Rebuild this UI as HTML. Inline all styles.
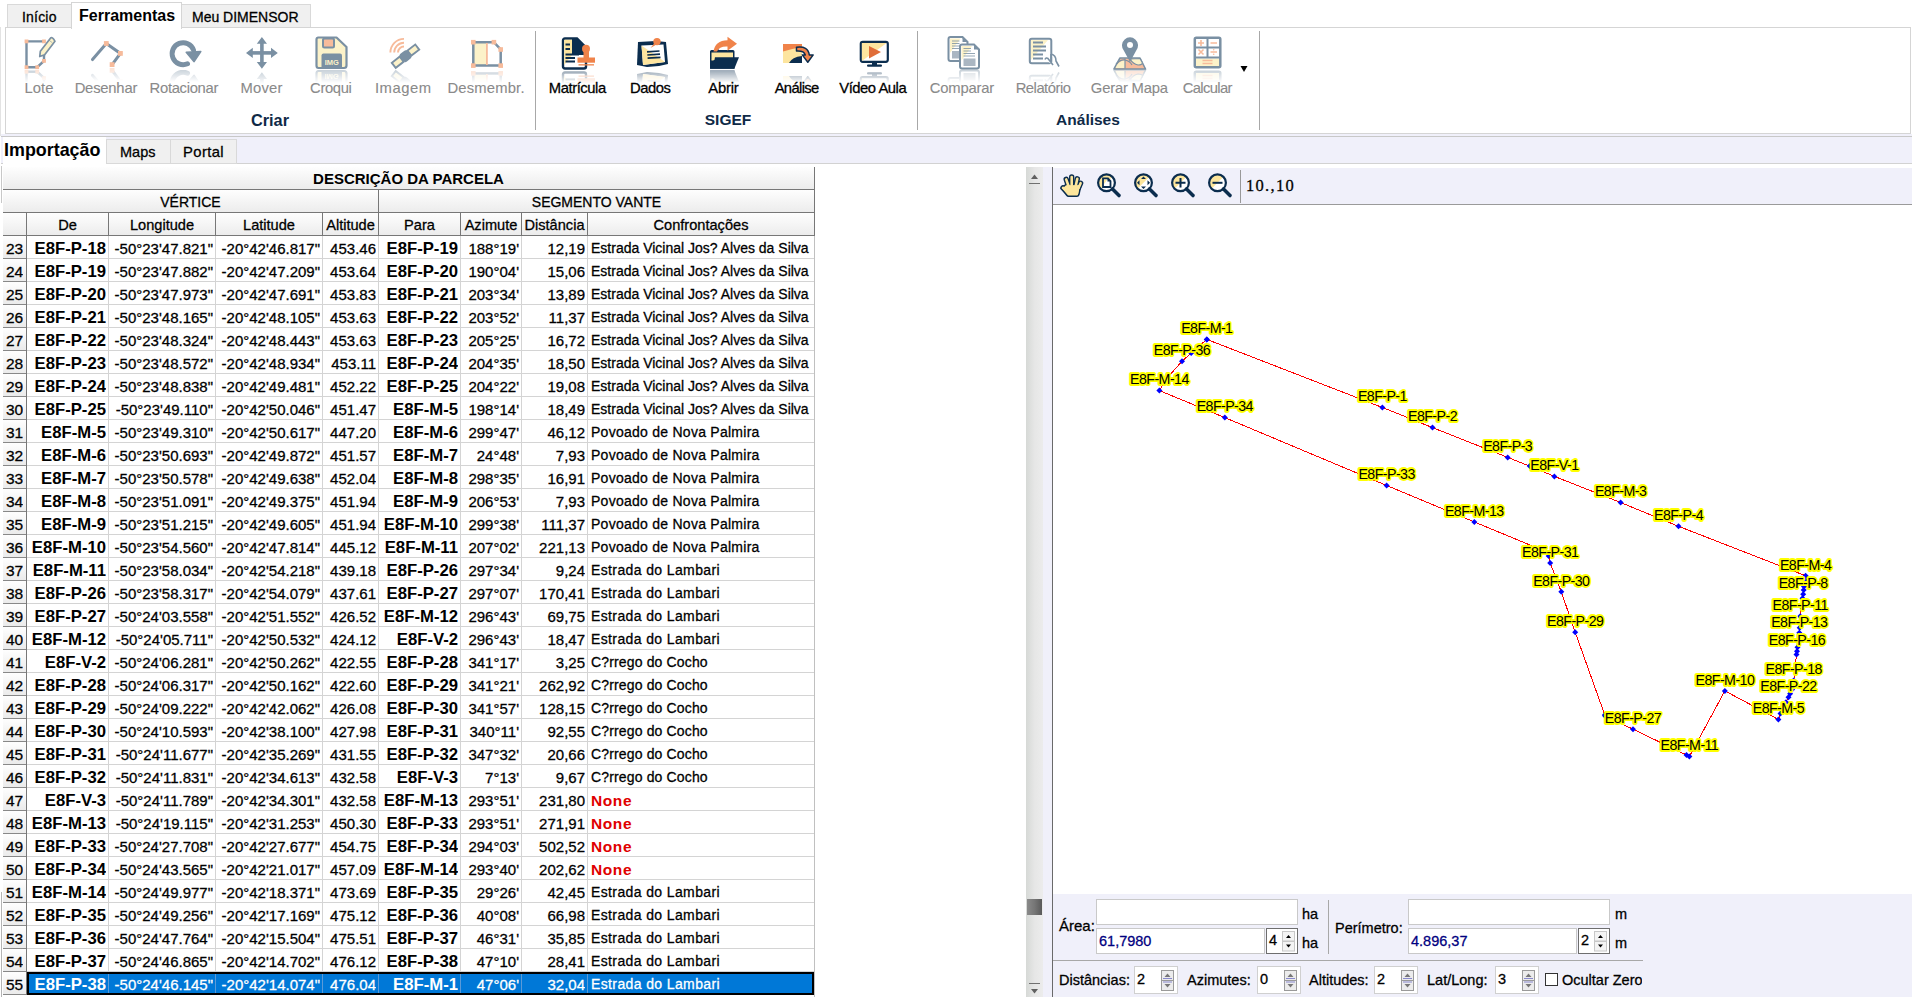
<!DOCTYPE html><html><head><meta charset="utf-8"><style>
*{margin:0;padding:0;box-sizing:border-box}
html,body{width:1912px;height:997px;overflow:hidden;background:#fff}
body{position:relative;font-family:'Liberation Sans',sans-serif;color:#000;-webkit-text-stroke-width:0.28px}
svg{-webkit-text-stroke-width:0}
.b,.grp{-webkit-text-stroke-width:0}
.a{position:absolute}
.t{position:absolute;white-space:pre;line-height:1}
.tab{position:absolute;background:#f0f0f0;border:1px solid #d9d9d9;border-bottom:none}
.rl{position:absolute;font-size:14.8px;white-space:pre;text-align:center;line-height:14px}
.dis{color:#8a8a8a;-webkit-text-stroke-width:0.1px}
.grp{position:absolute;font-size:15.5px;font-weight:bold;color:#0f2a47;white-space:pre;line-height:16px}
.hd{position:absolute;background:linear-gradient(#fefefe,#ececec);}
.row{position:absolute;left:3px;width:812px;height:23px}
.c{position:absolute;top:0;height:23px;white-space:pre;line-height:23px;overflow:hidden}
.num{font-size:15px}
.b{font-weight:bold;font-size:16.7px}
.tx{font-size:14px}
.lbl{position:absolute;font-size:13.5px;letter-spacing:-0.3px;white-space:pre;line-height:13px;color:#000;
 text-shadow:1px 0 #ff0,-1px 0 #ff0,0 1px #ff0,0 -1px #ff0,1px 1px #ff0,-1px -1px #ff0,1px -1px #ff0,-1px 1px #ff0,2px 0 #ff0,-2px 0 #ff0,0 2px #ff0,0 -2px #ff0}
</style></head><body>
<div class="tab" style="left:7px;top:4px;width:65px;height:24px"></div>
<div class="tab" style="left:181px;top:4px;width:130px;height:24px"></div>
<div class="a" style="left:5px;top:27px;width:1906px;height:107px;border:1px solid #d5d5d5;background:#fff"></div>
<div class="a" style="left:71px;top:2px;width:111px;height:27px;border:1px solid #d5d5d5;border-bottom:none;background:#fff"></div>
<div class="a" style="left:0px;top:27px;width:1px;height:109px;background:#e3e3e3"></div>
<div class="t" style="left:22px;top:10px;font-size:14px;letter-spacing:0.2px">Início</div>
<div class="t" style="left:79px;top:8px;font-size:16px;font-weight:bold;-webkit-text-stroke-width:0">Ferramentas</div>
<div class="t" style="left:192px;top:10px;font-size:14px">Meu DIMENSOR</div>
<svg class="a" style="left:24px;top:36px" width="32" height="47" viewBox="0 0 32 47"><g><path d="M2.5 5.4 H20 M2.5 5.4 V31.2 H13.2 L20 24.9 V19" fill="none" stroke="#7a90a3" stroke-width="2.4"/><path d="M15.75 20.56 L16.33 15.32 L26.63 1.92 Q28.5 0.5 30.97 5.28 L20.67 18.68 Z" fill="#fcf2c9" stroke="#7a90a3" stroke-width="1.7" stroke-linejoin="round"/><path d="M25.2 4.3 L28.3 6.7" stroke="#7a90a3" stroke-width="1" opacity="0.6"/><rect x="0.6000000000000001" y="3.5000000000000004" width="3.8" height="3.8" fill="#f7bb9b"/><rect x="18.1" y="3.5000000000000004" width="3.8" height="3.8" fill="#f7bb9b"/><rect x="0.6000000000000001" y="29.3" width="3.8" height="3.8" fill="#f7bb9b"/><rect x="11.299999999999999" y="29.3" width="3.8" height="3.8" fill="#f7bb9b"/><rect x="18.1" y="23.0" width="3.8" height="3.8" fill="#f7bb9b"/></g><defs><linearGradient id="gm24_36" x1="0" y1="0" x2="0" y2="1"><stop offset="0" stop-color="#fff" stop-opacity="0.45"/><stop offset="1" stop-color="#fff" stop-opacity="0"/></linearGradient><mask id="km24_36"><rect x="0" y="33" width="32" height="14" fill="url(#gm24_36)"/></mask></defs><g mask="url(#km24_36)"><g transform="translate(0,67) scale(1,-1)"><path d="M2.5 5.4 H20 M2.5 5.4 V31.2 H13.2 L20 24.9 V19" fill="none" stroke="#7a90a3" stroke-width="2.4"/><path d="M15.75 20.56 L16.33 15.32 L26.63 1.92 Q28.5 0.5 30.97 5.28 L20.67 18.68 Z" fill="#fcf2c9" stroke="#7a90a3" stroke-width="1.7" stroke-linejoin="round"/><path d="M25.2 4.3 L28.3 6.7" stroke="#7a90a3" stroke-width="1" opacity="0.6"/><rect x="0.6000000000000001" y="3.5000000000000004" width="3.8" height="3.8" fill="#f7bb9b"/><rect x="18.1" y="3.5000000000000004" width="3.8" height="3.8" fill="#f7bb9b"/><rect x="0.6000000000000001" y="29.3" width="3.8" height="3.8" fill="#f7bb9b"/><rect x="11.299999999999999" y="29.3" width="3.8" height="3.8" fill="#f7bb9b"/><rect x="18.1" y="23.0" width="3.8" height="3.8" fill="#f7bb9b"/></g></g></svg>
<svg class="a" style="left:90px;top:40px" width="33" height="41" viewBox="0 0 33 41"><g><path d="M2.5 19.6 L16.3 3.5 L30.4 13.4 L22.1 24.6" fill="none" stroke="#7a90a3" stroke-width="3" stroke-linecap="round"/><rect x="13.9" y="1.1" width="4.8" height="4.8" fill="#f7bb9b"/><rect x="28.0" y="11.0" width="4.8" height="4.8" fill="#f7bb9b"/><rect x="19.700000000000003" y="22.200000000000003" width="4.8" height="4.8" fill="#f7bb9b"/></g><defs><linearGradient id="gm90_40" x1="0" y1="0" x2="0" y2="1"><stop offset="0" stop-color="#fff" stop-opacity="0.45"/><stop offset="1" stop-color="#fff" stop-opacity="0"/></linearGradient><mask id="km90_40"><rect x="0" y="27" width="33" height="14" fill="url(#gm90_40)"/></mask></defs><g mask="url(#km90_40)"><g transform="translate(0,55) scale(1,-1)"><path d="M2.5 19.6 L16.3 3.5 L30.4 13.4 L22.1 24.6" fill="none" stroke="#7a90a3" stroke-width="3" stroke-linecap="round"/><rect x="13.9" y="1.1" width="4.8" height="4.8" fill="#f7bb9b"/><rect x="28.0" y="11.0" width="4.8" height="4.8" fill="#f7bb9b"/><rect x="19.700000000000003" y="22.200000000000003" width="4.8" height="4.8" fill="#f7bb9b"/></g></g></svg>
<svg class="a" style="left:167px;top:38px" width="35" height="44" viewBox="0 0 35 44"><g><path d="M20.5 25.8 A11 11 0 1 1 26.5 12" fill="none" stroke="#7a90a3" stroke-width="5" stroke-linecap="round"/><path d="M19.2 14.3 L33.8 13.6 L27.1 23.7 Z" fill="#7a90a3" stroke="#7a90a3" stroke-width="1.5" stroke-linejoin="round"/></g><defs><linearGradient id="gm167_38" x1="0" y1="0" x2="0" y2="1"><stop offset="0" stop-color="#fff" stop-opacity="0.45"/><stop offset="1" stop-color="#fff" stop-opacity="0"/></linearGradient><mask id="km167_38"><rect x="0" y="30" width="35" height="14" fill="url(#gm167_38)"/></mask></defs><g mask="url(#km167_38)"><g transform="translate(0,61) scale(1,-1)"><path d="M20.5 25.8 A11 11 0 1 1 26.5 12" fill="none" stroke="#7a90a3" stroke-width="5" stroke-linecap="round"/><path d="M19.2 14.3 L33.8 13.6 L27.1 23.7 Z" fill="#7a90a3" stroke="#7a90a3" stroke-width="1.5" stroke-linejoin="round"/></g></g></svg>
<svg class="a" style="left:245px;top:36px" width="34" height="48" viewBox="0 0 34 48"><g><rect x="15.099999999999998" y="6" width="3.6" height="21" fill="#7a90a3"/><rect x="6" y="15.099999999999998" width="21" height="3.6" fill="#7a90a3"/><path d="M16.9 1 L22.0 7.8 L11.799999999999999 7.8Z M16.9 32.8 L22.0 26 L11.799999999999999 26Z M1 16.9 L7.8 11.799999999999999 L7.8 22.0Z M32.8 16.9 L26 11.799999999999999 L26 22.0Z" fill="#7a90a3"/></g><defs><linearGradient id="gm245_36" x1="0" y1="0" x2="0" y2="1"><stop offset="0" stop-color="#fff" stop-opacity="0.45"/><stop offset="1" stop-color="#fff" stop-opacity="0"/></linearGradient><mask id="km245_36"><rect x="0" y="34" width="34" height="14" fill="url(#gm245_36)"/></mask></defs><g mask="url(#km245_36)"><g transform="translate(0,69) scale(1,-1)"><rect x="15.099999999999998" y="6" width="3.6" height="21" fill="#7a90a3"/><rect x="6" y="15.099999999999998" width="21" height="3.6" fill="#7a90a3"/><path d="M16.9 1 L22.0 7.8 L11.799999999999999 7.8Z M16.9 32.8 L22.0 26 L11.799999999999999 26Z M1 16.9 L7.8 11.799999999999999 L7.8 22.0Z M32.8 16.9 L26 11.799999999999999 L26 22.0Z" fill="#7a90a3"/></g></g></svg>
<svg class="a" style="left:315px;top:36px" width="33" height="47" viewBox="0 0 33 47"><g><path d="M3 1.5 H21.5 L31.5 11 V29.5 Q31.5 32 29 32 H3.5 Q1.5 32 1.5 29.5 V3.5 Q1.5 1.5 3.5 1.5Z" fill="#fcf2c9" stroke="#7a90a3" stroke-width="2.2" stroke-linejoin="round"/><rect x="8" y="2.5" width="11" height="9" rx="1.5" fill="#f7bb9b" stroke="#7a90a3" stroke-width="2"/><path d="M6.5 32 V19.5 Q6.5 17.5 8.5 17.5 H25 Q27 17.5 27 19.5 V32Z" fill="#7a90a3"/><text x="16.8" y="29" font-size="7.5" font-weight="bold" text-anchor="middle" fill="#fcf2c9" font-family="Liberation Sans">IMG</text></g><defs><linearGradient id="gm315_36" x1="0" y1="0" x2="0" y2="1"><stop offset="0" stop-color="#fff" stop-opacity="0.45"/><stop offset="1" stop-color="#fff" stop-opacity="0"/></linearGradient><mask id="km315_36"><rect x="0" y="33" width="33" height="14" fill="url(#gm315_36)"/></mask></defs><g mask="url(#km315_36)"><g transform="translate(0,67) scale(1,-1)"><path d="M3 1.5 H21.5 L31.5 11 V29.5 Q31.5 32 29 32 H3.5 Q1.5 32 1.5 29.5 V3.5 Q1.5 1.5 3.5 1.5Z" fill="#fcf2c9" stroke="#7a90a3" stroke-width="2.2" stroke-linejoin="round"/><rect x="8" y="2.5" width="11" height="9" rx="1.5" fill="#f7bb9b" stroke="#7a90a3" stroke-width="2"/><path d="M6.5 32 V19.5 Q6.5 17.5 8.5 17.5 H25 Q27 17.5 27 19.5 V32Z" fill="#7a90a3"/><text x="16.8" y="29" font-size="7.5" font-weight="bold" text-anchor="middle" fill="#fcf2c9" font-family="Liberation Sans">IMG</text></g></g></svg>
<svg class="a" style="left:386px;top:36px" width="36" height="47" viewBox="0 0 36 47"><g><path d="M4.4 16.5 A13.6 13.6 0 0 1 18 2.9000000000000004" fill="none" stroke="#f7bb9b" stroke-width="1.9"/><path d="M8.2 16.5 A9.8 9.8 0 0 1 18 6.699999999999999" fill="none" stroke="#f7bb9b" stroke-width="1.9"/><path d="M12 16.5 A6 6 0 0 1 18 10.5" fill="none" stroke="#f7bb9b" stroke-width="1.9"/><g transform="rotate(-38 19.5 20.2)"><rect x="4.6" y="17" width="10" height="6.4" fill="#fcf2c9" stroke="#7a90a3" stroke-width="1.9"/><rect x="24.4" y="17" width="10" height="6.4" fill="#fcf2c9" stroke="#7a90a3" stroke-width="1.9"/><rect x="14.8" y="15.2" width="9.4" height="10" rx="2.6" fill="#7a90a3"/></g></g><defs><linearGradient id="gm386_36" x1="0" y1="0" x2="0" y2="1"><stop offset="0" stop-color="#fff" stop-opacity="0.45"/><stop offset="1" stop-color="#fff" stop-opacity="0"/></linearGradient><mask id="km386_36"><rect x="0" y="33" width="36" height="14" fill="url(#gm386_36)"/></mask></defs><g mask="url(#km386_36)"><g transform="translate(0,67) scale(1,-1)"><path d="M4.4 16.5 A13.6 13.6 0 0 1 18 2.9000000000000004" fill="none" stroke="#f7bb9b" stroke-width="1.9"/><path d="M8.2 16.5 A9.8 9.8 0 0 1 18 6.699999999999999" fill="none" stroke="#f7bb9b" stroke-width="1.9"/><path d="M12 16.5 A6 6 0 0 1 18 10.5" fill="none" stroke="#f7bb9b" stroke-width="1.9"/><g transform="rotate(-38 19.5 20.2)"><rect x="4.6" y="17" width="10" height="6.4" fill="#fcf2c9" stroke="#7a90a3" stroke-width="1.9"/><rect x="24.4" y="17" width="10" height="6.4" fill="#fcf2c9" stroke="#7a90a3" stroke-width="1.9"/><rect x="14.8" y="15.2" width="9.4" height="10" rx="2.6" fill="#7a90a3"/></g></g></g></svg>
<svg class="a" style="left:470px;top:38px" width="34" height="45" viewBox="0 0 34 45"><g><rect x="3.3" y="4.2" width="13.6" height="23.4" fill="#fcf2c9"/><path d="M3.3 4.2 H23.9 L30.7 11.5 V27.6 H3.3Z" fill="none" stroke="#7a90a3" stroke-width="2.5"/><rect x="16" y="5" width="1.8" height="22" fill="#f7bb9b"/><rect x="1.0" y="1.9000000000000004" width="4.6" height="4.6" fill="#f7bb9b"/><rect x="21.599999999999998" y="1.9000000000000004" width="4.6" height="4.6" fill="#f7bb9b"/><rect x="28.4" y="9.2" width="4.6" height="4.6" fill="#f7bb9b"/><rect x="28.4" y="25.3" width="4.6" height="4.6" fill="#f7bb9b"/><rect x="1.0" y="25.3" width="4.6" height="4.6" fill="#f7bb9b"/></g><defs><linearGradient id="gm470_38" x1="0" y1="0" x2="0" y2="1"><stop offset="0" stop-color="#fff" stop-opacity="0.45"/><stop offset="1" stop-color="#fff" stop-opacity="0"/></linearGradient><mask id="km470_38"><rect x="0" y="31" width="34" height="14" fill="url(#gm470_38)"/></mask></defs><g mask="url(#km470_38)"><g transform="translate(0,63) scale(1,-1)"><rect x="3.3" y="4.2" width="13.6" height="23.4" fill="#fcf2c9"/><path d="M3.3 4.2 H23.9 L30.7 11.5 V27.6 H3.3Z" fill="none" stroke="#7a90a3" stroke-width="2.5"/><rect x="16" y="5" width="1.8" height="22" fill="#f7bb9b"/><rect x="1.0" y="1.9000000000000004" width="4.6" height="4.6" fill="#f7bb9b"/><rect x="21.599999999999998" y="1.9000000000000004" width="4.6" height="4.6" fill="#f7bb9b"/><rect x="28.4" y="9.2" width="4.6" height="4.6" fill="#f7bb9b"/><rect x="28.4" y="25.3" width="4.6" height="4.6" fill="#f7bb9b"/><rect x="1.0" y="25.3" width="4.6" height="4.6" fill="#f7bb9b"/></g></g></svg>
<svg class="a" style="left:561px;top:37px" width="35" height="47" viewBox="0 0 35 47"><g><path d="M4 1.5 H16 L25 10.5 V29.5 Q25 31.5 23 31.5 H4 Q2 31.5 2 29.5 V3.5 Q2 1.5 4 1.5Z" fill="#fff" stroke="#0b2d4e" stroke-width="2.4"/><path d="M3.2 2.7 H11 V18 L3.2 28Z" fill="#fde59f"/><path d="M11 2 H16 L24.5 10.5 V18 H11Z" fill="#0b2d4e"/><path d="M4.5 7.5 H9 M4.5 12 H9 M4.5 17.5 H18 M4.5 21 H14 M4.5 24.5 H14" stroke="#0b2d4e" stroke-width="1.8"/><circle cx="25" cy="11.8" r="4" fill="#f0834a"/><rect x="22.5" y="12" width="5.5" height="9" fill="#f0834a"/><rect x="16.5" y="20.5" width="17.5" height="5.2" fill="#f0834a"/><rect x="17.5" y="27" width="15.5" height="1.6" fill="#f0834a" opacity="0.8"/></g><defs><linearGradient id="gm561_37" x1="0" y1="0" x2="0" y2="1"><stop offset="0" stop-color="#fff" stop-opacity="0.45"/><stop offset="1" stop-color="#fff" stop-opacity="0"/></linearGradient><mask id="km561_37"><rect x="0" y="33" width="35" height="14" fill="url(#gm561_37)"/></mask></defs><g mask="url(#km561_37)"><g transform="translate(0,67) scale(1,-1)"><path d="M4 1.5 H16 L25 10.5 V29.5 Q25 31.5 23 31.5 H4 Q2 31.5 2 29.5 V3.5 Q2 1.5 4 1.5Z" fill="#fff" stroke="#0b2d4e" stroke-width="2.4"/><path d="M3.2 2.7 H11 V18 L3.2 28Z" fill="#fde59f"/><path d="M11 2 H16 L24.5 10.5 V18 H11Z" fill="#0b2d4e"/><path d="M4.5 7.5 H9 M4.5 12 H9 M4.5 17.5 H18 M4.5 21 H14 M4.5 24.5 H14" stroke="#0b2d4e" stroke-width="1.8"/><circle cx="25" cy="11.8" r="4" fill="#f0834a"/><rect x="22.5" y="12" width="5.5" height="9" fill="#f0834a"/><rect x="16.5" y="20.5" width="17.5" height="5.2" fill="#f0834a"/><rect x="17.5" y="27" width="15.5" height="1.6" fill="#f0834a" opacity="0.8"/></g></g></svg>
<svg class="a" style="left:635px;top:37px" width="35" height="46" viewBox="0 0 35 46"><g><path d="M3 5 L21 4 L31 5 L33 27 L24 29 L12 30 L2 28Z" fill="#0b2d4e"/><path d="M6.5 8.5 L28.5 7.5 L30 25 L8 28Z" fill="#fff"/><path d="M6.5 8.5 L30 25 L8 28Z" fill="#fde59f"/><path d="M12 14.8 L24.5 14 M12.3 18 L25 17.2 M12.6 21.2 L25.5 20.4" stroke="#0b2d4e" stroke-width="1.7"/><circle cx="22" cy="4.6" r="3.7" fill="#f0834a"/><path d="M19.5 6 L15.5 11 L21.5 7.5Z" fill="#f0834a"/></g><defs><linearGradient id="gm635_37" x1="0" y1="0" x2="0" y2="1"><stop offset="0" stop-color="#fff" stop-opacity="0.45"/><stop offset="1" stop-color="#fff" stop-opacity="0"/></linearGradient><mask id="km635_37"><rect x="0" y="32" width="35" height="14" fill="url(#gm635_37)"/></mask></defs><g mask="url(#km635_37)"><g transform="translate(0,65) scale(1,-1)"><path d="M3 5 L21 4 L31 5 L33 27 L24 29 L12 30 L2 28Z" fill="#0b2d4e"/><path d="M6.5 8.5 L28.5 7.5 L30 25 L8 28Z" fill="#fff"/><path d="M6.5 8.5 L30 25 L8 28Z" fill="#fde59f"/><path d="M12 14.8 L24.5 14 M12.3 18 L25 17.2 M12.6 21.2 L25.5 20.4" stroke="#0b2d4e" stroke-width="1.7"/><circle cx="22" cy="4.6" r="3.7" fill="#f0834a"/><path d="M19.5 6 L15.5 11 L21.5 7.5Z" fill="#f0834a"/></g></g></svg>
<svg class="a" style="left:709px;top:36px" width="31" height="47" viewBox="0 0 31 47"><g><path d="M1 15.5 Q1 14 2.5 14 H6 L7 13 H9 L10 14 H24 Q25.5 14 25.5 15.5 V32.8 H1Z" fill="#0b2d4e"/><rect x="2.5" y="16.5" width="21.5" height="8" fill="#fde59f"/><path d="M6 21.3 H30 L25.3 32.8 H1 Z" fill="#0b2d4e"/><path d="M2.5 24 L5.5 21.3 V24Z" fill="#fde59f"/><path d="M4.5 15.5 Q6 4.5 18.5 4.2 V0.8 L28 7.7 L18.5 14.8 V10.5 Q10.5 10 8 15.5Z" fill="#f0834a"/></g><defs><linearGradient id="gm709_36" x1="0" y1="0" x2="0" y2="1"><stop offset="0" stop-color="#fff" stop-opacity="0.45"/><stop offset="1" stop-color="#fff" stop-opacity="0"/></linearGradient><mask id="km709_36"><rect x="0" y="33" width="31" height="14" fill="url(#gm709_36)"/></mask></defs><g mask="url(#km709_36)"><g transform="translate(0,67) scale(1,-1)"><path d="M1 15.5 Q1 14 2.5 14 H6 L7 13 H9 L10 14 H24 Q25.5 14 25.5 15.5 V32.8 H1Z" fill="#0b2d4e"/><rect x="2.5" y="16.5" width="21.5" height="8" fill="#fde59f"/><path d="M6 21.3 H30 L25.3 32.8 H1 Z" fill="#0b2d4e"/><path d="M2.5 24 L5.5 21.3 V24Z" fill="#fde59f"/><path d="M4.5 15.5 Q6 4.5 18.5 4.2 V0.8 L28 7.7 L18.5 14.8 V10.5 Q10.5 10 8 15.5Z" fill="#f0834a"/></g></g></svg>
<svg class="a" style="left:782px;top:43px" width="32" height="40" viewBox="0 0 32 40"><g><rect x="1" y="1" width="19" height="19" fill="#fde59f"/><path d="M1 1 H20 V4 Q10 5.5 1 8.5Z" fill="#f0834a"/><path d="M20 13 Q10 14 7 20 H20Z" fill="#0b2d4e"/><path d="M14.5 4.2 Q26 2.5 27.3 11.9 H31.2 L25.8 19.3 L20.3 11.9 H23.3 Q22 7.5 14.5 8Z" fill="#f0834a" stroke="#0b2d4e" stroke-width="1.5" stroke-linejoin="round"/></g><defs><linearGradient id="gm782_43" x1="0" y1="0" x2="0" y2="1"><stop offset="0" stop-color="#fff" stop-opacity="0.45"/><stop offset="1" stop-color="#fff" stop-opacity="0"/></linearGradient><mask id="km782_43"><rect x="0" y="26" width="32" height="14" fill="url(#gm782_43)"/></mask></defs><g mask="url(#km782_43)"><g transform="translate(0,53) scale(1,-1)"><rect x="1" y="1" width="19" height="19" fill="#fde59f"/><path d="M1 1 H20 V4 Q10 5.5 1 8.5Z" fill="#f0834a"/><path d="M20 13 Q10 14 7 20 H20Z" fill="#0b2d4e"/><path d="M14.5 4.2 Q26 2.5 27.3 11.9 H31.2 L25.8 19.3 L20.3 11.9 H23.3 Q22 7.5 14.5 8Z" fill="#f0834a" stroke="#0b2d4e" stroke-width="1.5" stroke-linejoin="round"/></g></g></svg>
<svg class="a" style="left:859px;top:40px" width="31" height="43" viewBox="0 0 31 43"><g><rect x="1.8" y="1.8" width="27" height="20" rx="2" fill="#fff" stroke="#0b2d4e" stroke-width="2.2"/><path d="M2.9 2.9 H27.7 L2.9 20.9Z" fill="#fde59f"/><path d="M10 6 V18.5 L22 12Z" fill="#e06e3a"/><rect x="13" y="22" width="5" height="3" fill="#0b2d4e"/><rect x="8" y="24.5" width="15" height="2.3" rx="1.1" fill="#0b2d4e"/></g><defs><linearGradient id="gm859_40" x1="0" y1="0" x2="0" y2="1"><stop offset="0" stop-color="#fff" stop-opacity="0.45"/><stop offset="1" stop-color="#fff" stop-opacity="0"/></linearGradient><mask id="km859_40"><rect x="0" y="29" width="31" height="14" fill="url(#gm859_40)"/></mask></defs><g mask="url(#km859_40)"><g transform="translate(0,59) scale(1,-1)"><rect x="1.8" y="1.8" width="27" height="20" rx="2" fill="#fff" stroke="#0b2d4e" stroke-width="2.2"/><path d="M2.9 2.9 H27.7 L2.9 20.9Z" fill="#fde59f"/><path d="M10 6 V18.5 L22 12Z" fill="#e06e3a"/><rect x="13" y="22" width="5" height="3" fill="#0b2d4e"/><rect x="8" y="24.5" width="15" height="2.3" rx="1.1" fill="#0b2d4e"/></g></g></svg>
<svg class="a" style="left:947px;top:36px" width="33" height="47" viewBox="0 0 33 47"><g><path d="M3.5 1 H15.5 L20.5 6 V23 Q20.5 25 18.5 25 H3.5 Q1.5 25 1.5 23 V3 Q1.5 1 3.5 1Z" fill="#fff" stroke="#7a90a3" stroke-width="2"/><path d="M3.0 2.5 H13.5 L3.0 17Z" fill="#fcf2c9"/><path d="M15.5 1 L20.5 6 H15.5Z" fill="#7a90a3"/><path d="M5.0 5 H12.5 M5.0 7.5 H12.5 M5.0 10 H16.5 M5.0 12.5 H16.5" stroke="#7a90a3" stroke-width="1" opacity="0.8"/><rect x="5.0" y="15" width="12" height="7.5" fill="#aab6c2"/><path d="M15 8.5 H27 L32 13.5 V30.5 Q32 32.5 30 32.5 H15 Q13 32.5 13 30.5 V10.5 Q13 8.5 15 8.5Z" fill="#fff" stroke="#7a90a3" stroke-width="2"/><path d="M14.5 10.0 H25 L14.5 24.5Z" fill="#fcf2c9"/><path d="M27 8.5 L32 13.5 H27Z" fill="#7a90a3"/><path d="M16.5 12.5 H24 M16.5 15.0 H24 M16.5 17.5 H28 M16.5 20.0 H28" stroke="#7a90a3" stroke-width="1" opacity="0.8"/><rect x="16.5" y="22.5" width="12" height="7.5" fill="#aab6c2"/></g><defs><linearGradient id="gm947_36" x1="0" y1="0" x2="0" y2="1"><stop offset="0" stop-color="#fff" stop-opacity="0.45"/><stop offset="1" stop-color="#fff" stop-opacity="0"/></linearGradient><mask id="km947_36"><rect x="0" y="33" width="33" height="14" fill="url(#gm947_36)"/></mask></defs><g mask="url(#km947_36)"><g transform="translate(0,67) scale(1,-1)"><path d="M3.5 1 H15.5 L20.5 6 V23 Q20.5 25 18.5 25 H3.5 Q1.5 25 1.5 23 V3 Q1.5 1 3.5 1Z" fill="#fff" stroke="#7a90a3" stroke-width="2"/><path d="M3.0 2.5 H13.5 L3.0 17Z" fill="#fcf2c9"/><path d="M15.5 1 L20.5 6 H15.5Z" fill="#7a90a3"/><path d="M5.0 5 H12.5 M5.0 7.5 H12.5 M5.0 10 H16.5 M5.0 12.5 H16.5" stroke="#7a90a3" stroke-width="1" opacity="0.8"/><rect x="5.0" y="15" width="12" height="7.5" fill="#aab6c2"/><path d="M15 8.5 H27 L32 13.5 V30.5 Q32 32.5 30 32.5 H15 Q13 32.5 13 30.5 V10.5 Q13 8.5 15 8.5Z" fill="#fff" stroke="#7a90a3" stroke-width="2"/><path d="M14.5 10.0 H25 L14.5 24.5Z" fill="#fcf2c9"/><path d="M27 8.5 L32 13.5 H27Z" fill="#7a90a3"/><path d="M16.5 12.5 H24 M16.5 15.0 H24 M16.5 17.5 H28 M16.5 20.0 H28" stroke="#7a90a3" stroke-width="1" opacity="0.8"/><rect x="16.5" y="22.5" width="12" height="7.5" fill="#aab6c2"/></g></g></svg>
<svg class="a" style="left:1028px;top:37px" width="32" height="46" viewBox="0 0 32 46"><g><rect x="1.8" y="1.8" width="21.5" height="24.5" rx="2" fill="#fff" stroke="#7a90a3" stroke-width="2"/><path d="M3 3 H20 L3 23Z" fill="#fcf2c9"/><path d="M5 5.5 H15 M5 9.5 H18 M5 13.5 H18 M5 17.5 H15 M5 21.5 H15" stroke="#7a90a3" stroke-width="1.8"/><path d="M23 17 Q28 18 28 24 L31 29.5 M17 22.5 Q18 20 20 21.5 L25 28 M23 25 V17" fill="#fff" stroke="#7a90a3" stroke-width="1.6"/></g><defs><linearGradient id="gm1028_37" x1="0" y1="0" x2="0" y2="1"><stop offset="0" stop-color="#fff" stop-opacity="0.45"/><stop offset="1" stop-color="#fff" stop-opacity="0"/></linearGradient><mask id="km1028_37"><rect x="0" y="32" width="32" height="14" fill="url(#gm1028_37)"/></mask></defs><g mask="url(#km1028_37)"><g transform="translate(0,65) scale(1,-1)"><rect x="1.8" y="1.8" width="21.5" height="24.5" rx="2" fill="#fff" stroke="#7a90a3" stroke-width="2"/><path d="M3 3 H20 L3 23Z" fill="#fcf2c9"/><path d="M5 5.5 H15 M5 9.5 H18 M5 13.5 H18 M5 17.5 H15 M5 21.5 H15" stroke="#7a90a3" stroke-width="1.8"/><path d="M23 17 Q28 18 28 24 L31 29.5 M17 22.5 Q18 20 20 21.5 L25 28 M23 25 V17" fill="#fff" stroke="#7a90a3" stroke-width="1.6"/></g></g></svg>
<svg class="a" style="left:1113px;top:36px" width="34" height="47" viewBox="0 0 34 47"><g><path d="M7 22 H27 L32.5 33 H1Z" fill="#f7bb9b" stroke="#7a90a3" stroke-width="1.6" stroke-linejoin="round"/><path d="M2.5 32 Q5 25 12 24 V32Z" fill="#fcf2c9"/><path d="M17 23 Q20 28 25 29 Q29 29 29.5 27 L27 22.5Z" fill="#fcf2c9" stroke="#7a90a3" stroke-width="1.2"/><path d="M12 22.5 V32.5 M3 28 Q8 23 12 24 Q17 25 19 29" fill="none" stroke="#7a90a3" stroke-width="1.2"/><path d="M17 26 L10.5 14 A8 8 0 1 1 23.5 14Z" fill="#7a90a3"/><circle cx="17" cy="9" r="3" fill="#fff"/></g><defs><linearGradient id="gm1113_36" x1="0" y1="0" x2="0" y2="1"><stop offset="0" stop-color="#fff" stop-opacity="0.45"/><stop offset="1" stop-color="#fff" stop-opacity="0"/></linearGradient><mask id="km1113_36"><rect x="0" y="33" width="34" height="14" fill="url(#gm1113_36)"/></mask></defs><g mask="url(#km1113_36)"><g transform="translate(0,67) scale(1,-1)"><path d="M7 22 H27 L32.5 33 H1Z" fill="#f7bb9b" stroke="#7a90a3" stroke-width="1.6" stroke-linejoin="round"/><path d="M2.5 32 Q5 25 12 24 V32Z" fill="#fcf2c9"/><path d="M17 23 Q20 28 25 29 Q29 29 29.5 27 L27 22.5Z" fill="#fcf2c9" stroke="#7a90a3" stroke-width="1.2"/><path d="M12 22.5 V32.5 M3 28 Q8 23 12 24 Q17 25 19 29" fill="none" stroke="#7a90a3" stroke-width="1.2"/><path d="M17 26 L10.5 14 A8 8 0 1 1 23.5 14Z" fill="#7a90a3"/><circle cx="17" cy="9" r="3" fill="#fff"/></g></g></svg>
<svg class="a" style="left:1193px;top:36px" width="29" height="47" viewBox="0 0 29 47"><g><rect x="1.8" y="1.8" width="25.5" height="29.5" rx="1.5" fill="#fff" stroke="#7a90a3" stroke-width="2.5"/><rect x="3" y="22.5" width="23" height="7.5" fill="#fcf2c9"/><path d="M14.5 2 V21.5 M2 11.5 H27 M2 21.5 H27" stroke="#7a90a3" stroke-width="2"/><path d="M5 7 H11 M8 4 V10 M17.5 7 H24 M5.5 13.5 L10.5 18.5 M10.5 13.5 L5.5 18.5 M17.5 16 H24 M9.5 24.5 H19.5 M9.5 27.5 H19.5" stroke="#f7bb9b" stroke-width="1.6"/><circle cx="20.7" cy="13.7" r="0.8" fill="#f7bb9b"/><circle cx="20.7" cy="18.3" r="0.8" fill="#f7bb9b"/></g><defs><linearGradient id="gm1193_36" x1="0" y1="0" x2="0" y2="1"><stop offset="0" stop-color="#fff" stop-opacity="0.45"/><stop offset="1" stop-color="#fff" stop-opacity="0"/></linearGradient><mask id="km1193_36"><rect x="0" y="33" width="29" height="14" fill="url(#gm1193_36)"/></mask></defs><g mask="url(#km1193_36)"><g transform="translate(0,67) scale(1,-1)"><rect x="1.8" y="1.8" width="25.5" height="29.5" rx="1.5" fill="#fff" stroke="#7a90a3" stroke-width="2.5"/><rect x="3" y="22.5" width="23" height="7.5" fill="#fcf2c9"/><path d="M14.5 2 V21.5 M2 11.5 H27 M2 21.5 H27" stroke="#7a90a3" stroke-width="2"/><path d="M5 7 H11 M8 4 V10 M17.5 7 H24 M5.5 13.5 L10.5 18.5 M10.5 13.5 L5.5 18.5 M17.5 16 H24 M9.5 24.5 H19.5 M9.5 27.5 H19.5" stroke="#f7bb9b" stroke-width="1.6"/><circle cx="20.7" cy="13.7" r="0.8" fill="#f7bb9b"/><circle cx="20.7" cy="18.3" r="0.8" fill="#f7bb9b"/></g></g></svg>
<div class="rl dis" style="left:-20.985px;top:81px;width:120px;letter-spacing:0.03px">Lote</div>
<div class="rl dis" style="left:45.895px;top:81px;width:120px;letter-spacing:-0.21px">Desenhar</div>
<div class="rl dis" style="left:123.845px;top:81px;width:120px;letter-spacing:-0.31px">Rotacionar</div>
<div class="rl dis" style="left:201.585px;top:81px;width:120px;letter-spacing:0.17px">Mover</div>
<div class="rl dis" style="left:270.82px;top:81px;width:120px;letter-spacing:-0.36px">Croqui</div>
<div class="rl dis" style="left:343.275px;top:81px;width:120px;letter-spacing:0.55px">Imagem</div>
<div class="rl dis" style="left:426.085px;top:81px;width:120px;letter-spacing:0.17px">Desmembr.</div>
<div class="rl" style="left:517.28px;top:81px;width:120px;letter-spacing:-0.44px">Matrícula</div>
<div class="rl" style="left:590.265px;top:81px;width:120px;letter-spacing:-0.47px">Dados</div>
<div class="rl" style="left:663.395px;top:81px;width:120px;letter-spacing:-0.21px">Abrir</div>
<div class="rl" style="left:736.68px;top:81px;width:120px;letter-spacing:-0.64px">Análise</div>
<div class="rl" style="left:812.765px;top:81px;width:120px;letter-spacing:-0.47px">Vídeo Aula</div>
<div class="rl dis" style="left:901.905px;top:81px;width:120px;letter-spacing:-0.19px">Comparar</div>
<div class="rl dis" style="left:983.05px;top:81px;width:120px;letter-spacing:-0.5px">Relatório</div>
<div class="rl dis" style="left:1069.295px;top:81px;width:120px;letter-spacing:-0.21px">Gerar Mapa</div>
<div class="rl dis" style="left:1147.28px;top:81px;width:120px;letter-spacing:-0.64px">Calcular</div>
<div class="grp" style="left:220px;top:112px;width:100px;text-align:center;font-size:16.3px">Criar</div>
<div class="grp" style="left:678px;top:112px;width:100px;text-align:center">SIGEF</div>
<div class="grp" style="left:1038px;top:112px;width:100px;text-align:center">Análises</div>
<div class="a" style="left:535px;top:31px;width:1px;height:99px;background:#a8a8a8"></div>
<div class="a" style="left:917px;top:31px;width:1px;height:99px;background:#a8a8a8"></div>
<div class="a" style="left:1259px;top:31px;width:1px;height:99px;background:#a8a8a8"></div>
<svg class="a" style="left:1240px;top:65px" width="8" height="8"><path d="M0.5 1 H7.5 L4 7Z" fill="#000"/></svg>
<div class="a" style="left:1px;top:134px;width:1911px;height:30px;background:#f0f0fa;border-top:0"></div>
<div class="a" style="left:1px;top:136px;width:1911px;height:1px;background:#c8c8c8"></div>
<div class="a" style="left:1px;top:163px;width:1911px;height:1px;background:#d2d2d2"></div>
<div class="tab" style="left:106px;top:139px;width:65px;height:25px;border-bottom:1px solid #d9d9d9"></div>
<div class="tab" style="left:170px;top:139px;width:67px;height:25px;border-bottom:1px solid #d9d9d9"></div>
<div class="a" style="left:3px;top:137px;width:103px;height:30px;background:#fff"></div>
<div class="t" style="left:4px;top:142px;font-size:17.9px;font-weight:bold;-webkit-text-stroke-width:0">Importação</div>
<div class="t" style="left:120px;top:145px;font-size:14.5px">Maps</div>
<div class="t" style="left:183px;top:145px;font-size:14.8px;letter-spacing:0.4px">Portal</div>
<div class="hd" style="left:3px;top:167px;width:811px;height:22px"></div>
<div class="hd" style="left:3px;top:190px;width:811px;height:22px"></div>
<div class="hd" style="left:3px;top:213px;width:811px;height:22px"></div>
<div class="a" style="left:3px;top:189px;width:811px;height:1px;background:#777"></div>
<div class="a" style="left:3px;top:212px;width:811px;height:1px;background:#777"></div>
<div class="a" style="left:3px;top:235px;width:811px;height:1px;background:#777"></div>
<div class="a" style="left:378px;top:190px;width:1px;height:45px;background:#777"></div>
<div class="a" style="left:26px;top:213px;width:1px;height:22px;background:#777"></div>
<div class="a" style="left:108px;top:213px;width:1px;height:22px;background:#777"></div>
<div class="a" style="left:215px;top:213px;width:1px;height:22px;background:#777"></div>
<div class="a" style="left:322px;top:213px;width:1px;height:22px;background:#777"></div>
<div class="a" style="left:378px;top:213px;width:1px;height:22px;background:#777"></div>
<div class="a" style="left:460px;top:213px;width:1px;height:22px;background:#777"></div>
<div class="a" style="left:521px;top:213px;width:1px;height:22px;background:#777"></div>
<div class="a" style="left:587px;top:213px;width:1px;height:22px;background:#777"></div>
<div class="a" style="left:814px;top:167px;width:1px;height:69px;background:#777"></div>
<div class="a" style="left:814px;top:236px;width:1px;height:761px;background:#c0c0c0"></div>
<div class="c" style="left:3px;width:811px;top:167px;text-align:center;font-size:15px;font-weight:bold;line-height:24px;-webkit-text-stroke-width:0">DESCRIÇÃO DA PARCELA</div>
<div class="c" style="left:3px;width:375px;top:190px;text-align:center;font-size:14px;line-height:24px">VÉRTICE</div>
<div class="c" style="left:379px;width:435px;top:190px;text-align:center;font-size:14px;line-height:24px">SEGMENTO VANTE</div>
<div class="c" style="left:27px;width:81px;top:213px;text-align:center;font-size:14.6px;line-height:24px">De</div>
<div class="c" style="left:109px;width:106px;top:213px;text-align:center;font-size:14.6px;line-height:24px">Longitude</div>
<div class="c" style="left:216px;width:106px;top:213px;text-align:center;font-size:14.6px;line-height:24px">Latitude</div>
<div class="c" style="left:323px;width:55px;top:213px;text-align:center;font-size:14.6px;line-height:24px">Altitude</div>
<div class="c" style="left:379px;width:81px;top:213px;text-align:center;font-size:14.6px;line-height:24px">Para</div>
<div class="c" style="left:461px;width:60px;top:213px;text-align:center;font-size:14.6px;line-height:24px">Azimute</div>
<div class="c" style="left:522px;width:65px;top:213px;text-align:center;font-size:14.6px;line-height:24px">Distância</div>
<div class="c" style="left:588px;width:226px;top:213px;text-align:center;font-size:14.6px;line-height:24px">Confrontações</div>
<div class="a" style="left:3px;top:236px;width:23px;height:759px;background:linear-gradient(#fff,#f0f0f0)"></div>
<div class="a" style="left:3px;top:236px;width:23px;height:22px;background:linear-gradient(#fefefe,#ebebeb)"></div>
<div class="a" style="left:3px;top:258px;width:23px;height:1px;background:#888"></div>
<div class="a" style="left:26px;top:236px;width:1px;height:23px;background:#777"></div>
<div class="c tx" style="left:6px;top:236px;line-height:25px;font-size:15.5px">23</div>
<div class="a" style="left:27px;top:258px;width:787px;height:1px;background:#d4d4d4"></div>
<div class="a" style="left:108px;top:236px;width:1px;height:23px;background:#d4d4d4"></div>
<div class="a" style="left:215px;top:236px;width:1px;height:23px;background:#d4d4d4"></div>
<div class="a" style="left:322px;top:236px;width:1px;height:23px;background:#d4d4d4"></div>
<div class="a" style="left:378px;top:236px;width:1px;height:23px;background:#d4d4d4"></div>
<div class="a" style="left:460px;top:236px;width:1px;height:23px;background:#d4d4d4"></div>
<div class="a" style="left:521px;top:236px;width:1px;height:23px;background:#d4d4d4"></div>
<div class="a" style="left:587px;top:236px;width:1px;height:23px;background:#d4d4d4"></div>
<div class="c b" style="left:27px;width:79px;top:236px;text-align:right;line-height:25px;">E8F-P-18</div>
<div class="c num" style="left:109px;width:104px;top:236px;text-align:right;line-height:25px;">-50°23&#x27;47.821&quot;</div>
<div class="c num" style="left:216px;width:104px;top:236px;text-align:right;line-height:25px;">-20°42&#x27;46.817&quot;</div>
<div class="c num" style="left:323px;width:53px;top:236px;text-align:right;line-height:25px;">453.46</div>
<div class="c b" style="left:379px;width:79px;top:236px;text-align:right;line-height:25px;">E8F-P-19</div>
<div class="c num" style="left:461px;width:58px;top:236px;text-align:right;line-height:25px;">188°19&#x27;</div>
<div class="c num" style="left:522px;width:63px;top:236px;text-align:right;line-height:25px;">12,19</div>
<div class="c tx" style="left:591px;width:223px;top:236px;line-height:25px;letter-spacing:0px;">Estrada Vicinal Jos? Alves da Silva</div>
<div class="a" style="left:3px;top:259px;width:23px;height:22px;background:linear-gradient(#fefefe,#ebebeb)"></div>
<div class="a" style="left:3px;top:281px;width:23px;height:1px;background:#888"></div>
<div class="a" style="left:26px;top:259px;width:1px;height:23px;background:#777"></div>
<div class="c tx" style="left:6px;top:259px;line-height:25px;font-size:15.5px">24</div>
<div class="a" style="left:27px;top:281px;width:787px;height:1px;background:#d4d4d4"></div>
<div class="a" style="left:108px;top:259px;width:1px;height:23px;background:#d4d4d4"></div>
<div class="a" style="left:215px;top:259px;width:1px;height:23px;background:#d4d4d4"></div>
<div class="a" style="left:322px;top:259px;width:1px;height:23px;background:#d4d4d4"></div>
<div class="a" style="left:378px;top:259px;width:1px;height:23px;background:#d4d4d4"></div>
<div class="a" style="left:460px;top:259px;width:1px;height:23px;background:#d4d4d4"></div>
<div class="a" style="left:521px;top:259px;width:1px;height:23px;background:#d4d4d4"></div>
<div class="a" style="left:587px;top:259px;width:1px;height:23px;background:#d4d4d4"></div>
<div class="c b" style="left:27px;width:79px;top:259px;text-align:right;line-height:25px;">E8F-P-19</div>
<div class="c num" style="left:109px;width:104px;top:259px;text-align:right;line-height:25px;">-50°23&#x27;47.882&quot;</div>
<div class="c num" style="left:216px;width:104px;top:259px;text-align:right;line-height:25px;">-20°42&#x27;47.209&quot;</div>
<div class="c num" style="left:323px;width:53px;top:259px;text-align:right;line-height:25px;">453.64</div>
<div class="c b" style="left:379px;width:79px;top:259px;text-align:right;line-height:25px;">E8F-P-20</div>
<div class="c num" style="left:461px;width:58px;top:259px;text-align:right;line-height:25px;">190°04&#x27;</div>
<div class="c num" style="left:522px;width:63px;top:259px;text-align:right;line-height:25px;">15,06</div>
<div class="c tx" style="left:591px;width:223px;top:259px;line-height:25px;letter-spacing:0px;">Estrada Vicinal Jos? Alves da Silva</div>
<div class="a" style="left:3px;top:282px;width:23px;height:22px;background:linear-gradient(#fefefe,#ebebeb)"></div>
<div class="a" style="left:3px;top:304px;width:23px;height:1px;background:#888"></div>
<div class="a" style="left:26px;top:282px;width:1px;height:23px;background:#777"></div>
<div class="c tx" style="left:6px;top:282px;line-height:25px;font-size:15.5px">25</div>
<div class="a" style="left:27px;top:304px;width:787px;height:1px;background:#d4d4d4"></div>
<div class="a" style="left:108px;top:282px;width:1px;height:23px;background:#d4d4d4"></div>
<div class="a" style="left:215px;top:282px;width:1px;height:23px;background:#d4d4d4"></div>
<div class="a" style="left:322px;top:282px;width:1px;height:23px;background:#d4d4d4"></div>
<div class="a" style="left:378px;top:282px;width:1px;height:23px;background:#d4d4d4"></div>
<div class="a" style="left:460px;top:282px;width:1px;height:23px;background:#d4d4d4"></div>
<div class="a" style="left:521px;top:282px;width:1px;height:23px;background:#d4d4d4"></div>
<div class="a" style="left:587px;top:282px;width:1px;height:23px;background:#d4d4d4"></div>
<div class="c b" style="left:27px;width:79px;top:282px;text-align:right;line-height:25px;">E8F-P-20</div>
<div class="c num" style="left:109px;width:104px;top:282px;text-align:right;line-height:25px;">-50°23&#x27;47.973&quot;</div>
<div class="c num" style="left:216px;width:104px;top:282px;text-align:right;line-height:25px;">-20°42&#x27;47.691&quot;</div>
<div class="c num" style="left:323px;width:53px;top:282px;text-align:right;line-height:25px;">453.83</div>
<div class="c b" style="left:379px;width:79px;top:282px;text-align:right;line-height:25px;">E8F-P-21</div>
<div class="c num" style="left:461px;width:58px;top:282px;text-align:right;line-height:25px;">203°34&#x27;</div>
<div class="c num" style="left:522px;width:63px;top:282px;text-align:right;line-height:25px;">13,89</div>
<div class="c tx" style="left:591px;width:223px;top:282px;line-height:25px;letter-spacing:0px;">Estrada Vicinal Jos? Alves da Silva</div>
<div class="a" style="left:3px;top:305px;width:23px;height:22px;background:linear-gradient(#fefefe,#ebebeb)"></div>
<div class="a" style="left:3px;top:327px;width:23px;height:1px;background:#888"></div>
<div class="a" style="left:26px;top:305px;width:1px;height:23px;background:#777"></div>
<div class="c tx" style="left:6px;top:305px;line-height:25px;font-size:15.5px">26</div>
<div class="a" style="left:27px;top:327px;width:787px;height:1px;background:#d4d4d4"></div>
<div class="a" style="left:108px;top:305px;width:1px;height:23px;background:#d4d4d4"></div>
<div class="a" style="left:215px;top:305px;width:1px;height:23px;background:#d4d4d4"></div>
<div class="a" style="left:322px;top:305px;width:1px;height:23px;background:#d4d4d4"></div>
<div class="a" style="left:378px;top:305px;width:1px;height:23px;background:#d4d4d4"></div>
<div class="a" style="left:460px;top:305px;width:1px;height:23px;background:#d4d4d4"></div>
<div class="a" style="left:521px;top:305px;width:1px;height:23px;background:#d4d4d4"></div>
<div class="a" style="left:587px;top:305px;width:1px;height:23px;background:#d4d4d4"></div>
<div class="c b" style="left:27px;width:79px;top:305px;text-align:right;line-height:25px;">E8F-P-21</div>
<div class="c num" style="left:109px;width:104px;top:305px;text-align:right;line-height:25px;">-50°23&#x27;48.165&quot;</div>
<div class="c num" style="left:216px;width:104px;top:305px;text-align:right;line-height:25px;">-20°42&#x27;48.105&quot;</div>
<div class="c num" style="left:323px;width:53px;top:305px;text-align:right;line-height:25px;">453.63</div>
<div class="c b" style="left:379px;width:79px;top:305px;text-align:right;line-height:25px;">E8F-P-22</div>
<div class="c num" style="left:461px;width:58px;top:305px;text-align:right;line-height:25px;">203°52&#x27;</div>
<div class="c num" style="left:522px;width:63px;top:305px;text-align:right;line-height:25px;">11,37</div>
<div class="c tx" style="left:591px;width:223px;top:305px;line-height:25px;letter-spacing:0px;">Estrada Vicinal Jos? Alves da Silva</div>
<div class="a" style="left:3px;top:328px;width:23px;height:22px;background:linear-gradient(#fefefe,#ebebeb)"></div>
<div class="a" style="left:3px;top:350px;width:23px;height:1px;background:#888"></div>
<div class="a" style="left:26px;top:328px;width:1px;height:23px;background:#777"></div>
<div class="c tx" style="left:6px;top:328px;line-height:25px;font-size:15.5px">27</div>
<div class="a" style="left:27px;top:350px;width:787px;height:1px;background:#d4d4d4"></div>
<div class="a" style="left:108px;top:328px;width:1px;height:23px;background:#d4d4d4"></div>
<div class="a" style="left:215px;top:328px;width:1px;height:23px;background:#d4d4d4"></div>
<div class="a" style="left:322px;top:328px;width:1px;height:23px;background:#d4d4d4"></div>
<div class="a" style="left:378px;top:328px;width:1px;height:23px;background:#d4d4d4"></div>
<div class="a" style="left:460px;top:328px;width:1px;height:23px;background:#d4d4d4"></div>
<div class="a" style="left:521px;top:328px;width:1px;height:23px;background:#d4d4d4"></div>
<div class="a" style="left:587px;top:328px;width:1px;height:23px;background:#d4d4d4"></div>
<div class="c b" style="left:27px;width:79px;top:328px;text-align:right;line-height:25px;">E8F-P-22</div>
<div class="c num" style="left:109px;width:104px;top:328px;text-align:right;line-height:25px;">-50°23&#x27;48.324&quot;</div>
<div class="c num" style="left:216px;width:104px;top:328px;text-align:right;line-height:25px;">-20°42&#x27;48.443&quot;</div>
<div class="c num" style="left:323px;width:53px;top:328px;text-align:right;line-height:25px;">453.63</div>
<div class="c b" style="left:379px;width:79px;top:328px;text-align:right;line-height:25px;">E8F-P-23</div>
<div class="c num" style="left:461px;width:58px;top:328px;text-align:right;line-height:25px;">205°25&#x27;</div>
<div class="c num" style="left:522px;width:63px;top:328px;text-align:right;line-height:25px;">16,72</div>
<div class="c tx" style="left:591px;width:223px;top:328px;line-height:25px;letter-spacing:0px;">Estrada Vicinal Jos? Alves da Silva</div>
<div class="a" style="left:3px;top:351px;width:23px;height:22px;background:linear-gradient(#fefefe,#ebebeb)"></div>
<div class="a" style="left:3px;top:373px;width:23px;height:1px;background:#888"></div>
<div class="a" style="left:26px;top:351px;width:1px;height:23px;background:#777"></div>
<div class="c tx" style="left:6px;top:351px;line-height:25px;font-size:15.5px">28</div>
<div class="a" style="left:27px;top:373px;width:787px;height:1px;background:#d4d4d4"></div>
<div class="a" style="left:108px;top:351px;width:1px;height:23px;background:#d4d4d4"></div>
<div class="a" style="left:215px;top:351px;width:1px;height:23px;background:#d4d4d4"></div>
<div class="a" style="left:322px;top:351px;width:1px;height:23px;background:#d4d4d4"></div>
<div class="a" style="left:378px;top:351px;width:1px;height:23px;background:#d4d4d4"></div>
<div class="a" style="left:460px;top:351px;width:1px;height:23px;background:#d4d4d4"></div>
<div class="a" style="left:521px;top:351px;width:1px;height:23px;background:#d4d4d4"></div>
<div class="a" style="left:587px;top:351px;width:1px;height:23px;background:#d4d4d4"></div>
<div class="c b" style="left:27px;width:79px;top:351px;text-align:right;line-height:25px;">E8F-P-23</div>
<div class="c num" style="left:109px;width:104px;top:351px;text-align:right;line-height:25px;">-50°23&#x27;48.572&quot;</div>
<div class="c num" style="left:216px;width:104px;top:351px;text-align:right;line-height:25px;">-20°42&#x27;48.934&quot;</div>
<div class="c num" style="left:323px;width:53px;top:351px;text-align:right;line-height:25px;">453.11</div>
<div class="c b" style="left:379px;width:79px;top:351px;text-align:right;line-height:25px;">E8F-P-24</div>
<div class="c num" style="left:461px;width:58px;top:351px;text-align:right;line-height:25px;">204°35&#x27;</div>
<div class="c num" style="left:522px;width:63px;top:351px;text-align:right;line-height:25px;">18,50</div>
<div class="c tx" style="left:591px;width:223px;top:351px;line-height:25px;letter-spacing:0px;">Estrada Vicinal Jos? Alves da Silva</div>
<div class="a" style="left:3px;top:374px;width:23px;height:22px;background:linear-gradient(#fefefe,#ebebeb)"></div>
<div class="a" style="left:3px;top:396px;width:23px;height:1px;background:#888"></div>
<div class="a" style="left:26px;top:374px;width:1px;height:23px;background:#777"></div>
<div class="c tx" style="left:6px;top:374px;line-height:25px;font-size:15.5px">29</div>
<div class="a" style="left:27px;top:396px;width:787px;height:1px;background:#d4d4d4"></div>
<div class="a" style="left:108px;top:374px;width:1px;height:23px;background:#d4d4d4"></div>
<div class="a" style="left:215px;top:374px;width:1px;height:23px;background:#d4d4d4"></div>
<div class="a" style="left:322px;top:374px;width:1px;height:23px;background:#d4d4d4"></div>
<div class="a" style="left:378px;top:374px;width:1px;height:23px;background:#d4d4d4"></div>
<div class="a" style="left:460px;top:374px;width:1px;height:23px;background:#d4d4d4"></div>
<div class="a" style="left:521px;top:374px;width:1px;height:23px;background:#d4d4d4"></div>
<div class="a" style="left:587px;top:374px;width:1px;height:23px;background:#d4d4d4"></div>
<div class="c b" style="left:27px;width:79px;top:374px;text-align:right;line-height:25px;">E8F-P-24</div>
<div class="c num" style="left:109px;width:104px;top:374px;text-align:right;line-height:25px;">-50°23&#x27;48.838&quot;</div>
<div class="c num" style="left:216px;width:104px;top:374px;text-align:right;line-height:25px;">-20°42&#x27;49.481&quot;</div>
<div class="c num" style="left:323px;width:53px;top:374px;text-align:right;line-height:25px;">452.22</div>
<div class="c b" style="left:379px;width:79px;top:374px;text-align:right;line-height:25px;">E8F-P-25</div>
<div class="c num" style="left:461px;width:58px;top:374px;text-align:right;line-height:25px;">204°22&#x27;</div>
<div class="c num" style="left:522px;width:63px;top:374px;text-align:right;line-height:25px;">19,08</div>
<div class="c tx" style="left:591px;width:223px;top:374px;line-height:25px;letter-spacing:0px;">Estrada Vicinal Jos? Alves da Silva</div>
<div class="a" style="left:3px;top:397px;width:23px;height:22px;background:linear-gradient(#fefefe,#ebebeb)"></div>
<div class="a" style="left:3px;top:419px;width:23px;height:1px;background:#888"></div>
<div class="a" style="left:26px;top:397px;width:1px;height:23px;background:#777"></div>
<div class="c tx" style="left:6px;top:397px;line-height:25px;font-size:15.5px">30</div>
<div class="a" style="left:27px;top:419px;width:787px;height:1px;background:#d4d4d4"></div>
<div class="a" style="left:108px;top:397px;width:1px;height:23px;background:#d4d4d4"></div>
<div class="a" style="left:215px;top:397px;width:1px;height:23px;background:#d4d4d4"></div>
<div class="a" style="left:322px;top:397px;width:1px;height:23px;background:#d4d4d4"></div>
<div class="a" style="left:378px;top:397px;width:1px;height:23px;background:#d4d4d4"></div>
<div class="a" style="left:460px;top:397px;width:1px;height:23px;background:#d4d4d4"></div>
<div class="a" style="left:521px;top:397px;width:1px;height:23px;background:#d4d4d4"></div>
<div class="a" style="left:587px;top:397px;width:1px;height:23px;background:#d4d4d4"></div>
<div class="c b" style="left:27px;width:79px;top:397px;text-align:right;line-height:25px;">E8F-P-25</div>
<div class="c num" style="left:109px;width:104px;top:397px;text-align:right;line-height:25px;">-50°23&#x27;49.110&quot;</div>
<div class="c num" style="left:216px;width:104px;top:397px;text-align:right;line-height:25px;">-20°42&#x27;50.046&quot;</div>
<div class="c num" style="left:323px;width:53px;top:397px;text-align:right;line-height:25px;">451.47</div>
<div class="c b" style="left:379px;width:79px;top:397px;text-align:right;line-height:25px;">E8F-M-5</div>
<div class="c num" style="left:461px;width:58px;top:397px;text-align:right;line-height:25px;">198°14&#x27;</div>
<div class="c num" style="left:522px;width:63px;top:397px;text-align:right;line-height:25px;">18,49</div>
<div class="c tx" style="left:591px;width:223px;top:397px;line-height:25px;letter-spacing:0px;">Estrada Vicinal Jos? Alves da Silva</div>
<div class="a" style="left:3px;top:420px;width:23px;height:22px;background:linear-gradient(#fefefe,#ebebeb)"></div>
<div class="a" style="left:3px;top:442px;width:23px;height:1px;background:#888"></div>
<div class="a" style="left:26px;top:420px;width:1px;height:23px;background:#777"></div>
<div class="c tx" style="left:6px;top:420px;line-height:25px;font-size:15.5px">31</div>
<div class="a" style="left:27px;top:442px;width:787px;height:1px;background:#d4d4d4"></div>
<div class="a" style="left:108px;top:420px;width:1px;height:23px;background:#d4d4d4"></div>
<div class="a" style="left:215px;top:420px;width:1px;height:23px;background:#d4d4d4"></div>
<div class="a" style="left:322px;top:420px;width:1px;height:23px;background:#d4d4d4"></div>
<div class="a" style="left:378px;top:420px;width:1px;height:23px;background:#d4d4d4"></div>
<div class="a" style="left:460px;top:420px;width:1px;height:23px;background:#d4d4d4"></div>
<div class="a" style="left:521px;top:420px;width:1px;height:23px;background:#d4d4d4"></div>
<div class="a" style="left:587px;top:420px;width:1px;height:23px;background:#d4d4d4"></div>
<div class="c b" style="left:27px;width:79px;top:420px;text-align:right;line-height:25px;">E8F-M-5</div>
<div class="c num" style="left:109px;width:104px;top:420px;text-align:right;line-height:25px;">-50°23&#x27;49.310&quot;</div>
<div class="c num" style="left:216px;width:104px;top:420px;text-align:right;line-height:25px;">-20°42&#x27;50.617&quot;</div>
<div class="c num" style="left:323px;width:53px;top:420px;text-align:right;line-height:25px;">447.20</div>
<div class="c b" style="left:379px;width:79px;top:420px;text-align:right;line-height:25px;">E8F-M-6</div>
<div class="c num" style="left:461px;width:58px;top:420px;text-align:right;line-height:25px;">299°47&#x27;</div>
<div class="c num" style="left:522px;width:63px;top:420px;text-align:right;line-height:25px;">46,12</div>
<div class="c tx" style="left:591px;width:223px;top:420px;line-height:25px;letter-spacing:0.26px;">Povoado de Nova Palmira</div>
<div class="a" style="left:3px;top:443px;width:23px;height:22px;background:linear-gradient(#fefefe,#ebebeb)"></div>
<div class="a" style="left:3px;top:465px;width:23px;height:1px;background:#888"></div>
<div class="a" style="left:26px;top:443px;width:1px;height:23px;background:#777"></div>
<div class="c tx" style="left:6px;top:443px;line-height:25px;font-size:15.5px">32</div>
<div class="a" style="left:27px;top:465px;width:787px;height:1px;background:#d4d4d4"></div>
<div class="a" style="left:108px;top:443px;width:1px;height:23px;background:#d4d4d4"></div>
<div class="a" style="left:215px;top:443px;width:1px;height:23px;background:#d4d4d4"></div>
<div class="a" style="left:322px;top:443px;width:1px;height:23px;background:#d4d4d4"></div>
<div class="a" style="left:378px;top:443px;width:1px;height:23px;background:#d4d4d4"></div>
<div class="a" style="left:460px;top:443px;width:1px;height:23px;background:#d4d4d4"></div>
<div class="a" style="left:521px;top:443px;width:1px;height:23px;background:#d4d4d4"></div>
<div class="a" style="left:587px;top:443px;width:1px;height:23px;background:#d4d4d4"></div>
<div class="c b" style="left:27px;width:79px;top:443px;text-align:right;line-height:25px;">E8F-M-6</div>
<div class="c num" style="left:109px;width:104px;top:443px;text-align:right;line-height:25px;">-50°23&#x27;50.693&quot;</div>
<div class="c num" style="left:216px;width:104px;top:443px;text-align:right;line-height:25px;">-20°42&#x27;49.872&quot;</div>
<div class="c num" style="left:323px;width:53px;top:443px;text-align:right;line-height:25px;">451.57</div>
<div class="c b" style="left:379px;width:79px;top:443px;text-align:right;line-height:25px;">E8F-M-7</div>
<div class="c num" style="left:461px;width:58px;top:443px;text-align:right;line-height:25px;">24°48&#x27;</div>
<div class="c num" style="left:522px;width:63px;top:443px;text-align:right;line-height:25px;">7,93</div>
<div class="c tx" style="left:591px;width:223px;top:443px;line-height:25px;letter-spacing:0.26px;">Povoado de Nova Palmira</div>
<div class="a" style="left:3px;top:466px;width:23px;height:22px;background:linear-gradient(#fefefe,#ebebeb)"></div>
<div class="a" style="left:3px;top:488px;width:23px;height:1px;background:#888"></div>
<div class="a" style="left:26px;top:466px;width:1px;height:23px;background:#777"></div>
<div class="c tx" style="left:6px;top:466px;line-height:25px;font-size:15.5px">33</div>
<div class="a" style="left:27px;top:488px;width:787px;height:1px;background:#d4d4d4"></div>
<div class="a" style="left:108px;top:466px;width:1px;height:23px;background:#d4d4d4"></div>
<div class="a" style="left:215px;top:466px;width:1px;height:23px;background:#d4d4d4"></div>
<div class="a" style="left:322px;top:466px;width:1px;height:23px;background:#d4d4d4"></div>
<div class="a" style="left:378px;top:466px;width:1px;height:23px;background:#d4d4d4"></div>
<div class="a" style="left:460px;top:466px;width:1px;height:23px;background:#d4d4d4"></div>
<div class="a" style="left:521px;top:466px;width:1px;height:23px;background:#d4d4d4"></div>
<div class="a" style="left:587px;top:466px;width:1px;height:23px;background:#d4d4d4"></div>
<div class="c b" style="left:27px;width:79px;top:466px;text-align:right;line-height:25px;">E8F-M-7</div>
<div class="c num" style="left:109px;width:104px;top:466px;text-align:right;line-height:25px;">-50°23&#x27;50.578&quot;</div>
<div class="c num" style="left:216px;width:104px;top:466px;text-align:right;line-height:25px;">-20°42&#x27;49.638&quot;</div>
<div class="c num" style="left:323px;width:53px;top:466px;text-align:right;line-height:25px;">452.04</div>
<div class="c b" style="left:379px;width:79px;top:466px;text-align:right;line-height:25px;">E8F-M-8</div>
<div class="c num" style="left:461px;width:58px;top:466px;text-align:right;line-height:25px;">298°35&#x27;</div>
<div class="c num" style="left:522px;width:63px;top:466px;text-align:right;line-height:25px;">16,91</div>
<div class="c tx" style="left:591px;width:223px;top:466px;line-height:25px;letter-spacing:0.26px;">Povoado de Nova Palmira</div>
<div class="a" style="left:3px;top:489px;width:23px;height:22px;background:linear-gradient(#fefefe,#ebebeb)"></div>
<div class="a" style="left:3px;top:511px;width:23px;height:1px;background:#888"></div>
<div class="a" style="left:26px;top:489px;width:1px;height:23px;background:#777"></div>
<div class="c tx" style="left:6px;top:489px;line-height:25px;font-size:15.5px">34</div>
<div class="a" style="left:27px;top:511px;width:787px;height:1px;background:#d4d4d4"></div>
<div class="a" style="left:108px;top:489px;width:1px;height:23px;background:#d4d4d4"></div>
<div class="a" style="left:215px;top:489px;width:1px;height:23px;background:#d4d4d4"></div>
<div class="a" style="left:322px;top:489px;width:1px;height:23px;background:#d4d4d4"></div>
<div class="a" style="left:378px;top:489px;width:1px;height:23px;background:#d4d4d4"></div>
<div class="a" style="left:460px;top:489px;width:1px;height:23px;background:#d4d4d4"></div>
<div class="a" style="left:521px;top:489px;width:1px;height:23px;background:#d4d4d4"></div>
<div class="a" style="left:587px;top:489px;width:1px;height:23px;background:#d4d4d4"></div>
<div class="c b" style="left:27px;width:79px;top:489px;text-align:right;line-height:25px;">E8F-M-8</div>
<div class="c num" style="left:109px;width:104px;top:489px;text-align:right;line-height:25px;">-50°23&#x27;51.091&quot;</div>
<div class="c num" style="left:216px;width:104px;top:489px;text-align:right;line-height:25px;">-20°42&#x27;49.375&quot;</div>
<div class="c num" style="left:323px;width:53px;top:489px;text-align:right;line-height:25px;">451.94</div>
<div class="c b" style="left:379px;width:79px;top:489px;text-align:right;line-height:25px;">E8F-M-9</div>
<div class="c num" style="left:461px;width:58px;top:489px;text-align:right;line-height:25px;">206°53&#x27;</div>
<div class="c num" style="left:522px;width:63px;top:489px;text-align:right;line-height:25px;">7,93</div>
<div class="c tx" style="left:591px;width:223px;top:489px;line-height:25px;letter-spacing:0.26px;">Povoado de Nova Palmira</div>
<div class="a" style="left:3px;top:512px;width:23px;height:22px;background:linear-gradient(#fefefe,#ebebeb)"></div>
<div class="a" style="left:3px;top:534px;width:23px;height:1px;background:#888"></div>
<div class="a" style="left:26px;top:512px;width:1px;height:23px;background:#777"></div>
<div class="c tx" style="left:6px;top:512px;line-height:25px;font-size:15.5px">35</div>
<div class="a" style="left:27px;top:534px;width:787px;height:1px;background:#d4d4d4"></div>
<div class="a" style="left:108px;top:512px;width:1px;height:23px;background:#d4d4d4"></div>
<div class="a" style="left:215px;top:512px;width:1px;height:23px;background:#d4d4d4"></div>
<div class="a" style="left:322px;top:512px;width:1px;height:23px;background:#d4d4d4"></div>
<div class="a" style="left:378px;top:512px;width:1px;height:23px;background:#d4d4d4"></div>
<div class="a" style="left:460px;top:512px;width:1px;height:23px;background:#d4d4d4"></div>
<div class="a" style="left:521px;top:512px;width:1px;height:23px;background:#d4d4d4"></div>
<div class="a" style="left:587px;top:512px;width:1px;height:23px;background:#d4d4d4"></div>
<div class="c b" style="left:27px;width:79px;top:512px;text-align:right;line-height:25px;">E8F-M-9</div>
<div class="c num" style="left:109px;width:104px;top:512px;text-align:right;line-height:25px;">-50°23&#x27;51.215&quot;</div>
<div class="c num" style="left:216px;width:104px;top:512px;text-align:right;line-height:25px;">-20°42&#x27;49.605&quot;</div>
<div class="c num" style="left:323px;width:53px;top:512px;text-align:right;line-height:25px;">451.94</div>
<div class="c b" style="left:379px;width:79px;top:512px;text-align:right;line-height:25px;">E8F-M-10</div>
<div class="c num" style="left:461px;width:58px;top:512px;text-align:right;line-height:25px;">299°38&#x27;</div>
<div class="c num" style="left:522px;width:63px;top:512px;text-align:right;line-height:25px;">111,37</div>
<div class="c tx" style="left:591px;width:223px;top:512px;line-height:25px;letter-spacing:0.26px;">Povoado de Nova Palmira</div>
<div class="a" style="left:3px;top:535px;width:23px;height:22px;background:linear-gradient(#fefefe,#ebebeb)"></div>
<div class="a" style="left:3px;top:557px;width:23px;height:1px;background:#888"></div>
<div class="a" style="left:26px;top:535px;width:1px;height:23px;background:#777"></div>
<div class="c tx" style="left:6px;top:535px;line-height:25px;font-size:15.5px">36</div>
<div class="a" style="left:27px;top:557px;width:787px;height:1px;background:#d4d4d4"></div>
<div class="a" style="left:108px;top:535px;width:1px;height:23px;background:#d4d4d4"></div>
<div class="a" style="left:215px;top:535px;width:1px;height:23px;background:#d4d4d4"></div>
<div class="a" style="left:322px;top:535px;width:1px;height:23px;background:#d4d4d4"></div>
<div class="a" style="left:378px;top:535px;width:1px;height:23px;background:#d4d4d4"></div>
<div class="a" style="left:460px;top:535px;width:1px;height:23px;background:#d4d4d4"></div>
<div class="a" style="left:521px;top:535px;width:1px;height:23px;background:#d4d4d4"></div>
<div class="a" style="left:587px;top:535px;width:1px;height:23px;background:#d4d4d4"></div>
<div class="c b" style="left:27px;width:79px;top:535px;text-align:right;line-height:25px;">E8F-M-10</div>
<div class="c num" style="left:109px;width:104px;top:535px;text-align:right;line-height:25px;">-50°23&#x27;54.560&quot;</div>
<div class="c num" style="left:216px;width:104px;top:535px;text-align:right;line-height:25px;">-20°42&#x27;47.814&quot;</div>
<div class="c num" style="left:323px;width:53px;top:535px;text-align:right;line-height:25px;">445.12</div>
<div class="c b" style="left:379px;width:79px;top:535px;text-align:right;line-height:25px;">E8F-M-11</div>
<div class="c num" style="left:461px;width:58px;top:535px;text-align:right;line-height:25px;">207°02&#x27;</div>
<div class="c num" style="left:522px;width:63px;top:535px;text-align:right;line-height:25px;">221,13</div>
<div class="c tx" style="left:591px;width:223px;top:535px;line-height:25px;letter-spacing:0.26px;">Povoado de Nova Palmira</div>
<div class="a" style="left:3px;top:558px;width:23px;height:22px;background:linear-gradient(#fefefe,#ebebeb)"></div>
<div class="a" style="left:3px;top:580px;width:23px;height:1px;background:#888"></div>
<div class="a" style="left:26px;top:558px;width:1px;height:23px;background:#777"></div>
<div class="c tx" style="left:6px;top:558px;line-height:25px;font-size:15.5px">37</div>
<div class="a" style="left:27px;top:580px;width:787px;height:1px;background:#d4d4d4"></div>
<div class="a" style="left:108px;top:558px;width:1px;height:23px;background:#d4d4d4"></div>
<div class="a" style="left:215px;top:558px;width:1px;height:23px;background:#d4d4d4"></div>
<div class="a" style="left:322px;top:558px;width:1px;height:23px;background:#d4d4d4"></div>
<div class="a" style="left:378px;top:558px;width:1px;height:23px;background:#d4d4d4"></div>
<div class="a" style="left:460px;top:558px;width:1px;height:23px;background:#d4d4d4"></div>
<div class="a" style="left:521px;top:558px;width:1px;height:23px;background:#d4d4d4"></div>
<div class="a" style="left:587px;top:558px;width:1px;height:23px;background:#d4d4d4"></div>
<div class="c b" style="left:27px;width:79px;top:558px;text-align:right;line-height:25px;">E8F-M-11</div>
<div class="c num" style="left:109px;width:104px;top:558px;text-align:right;line-height:25px;">-50°23&#x27;58.034&quot;</div>
<div class="c num" style="left:216px;width:104px;top:558px;text-align:right;line-height:25px;">-20°42&#x27;54.218&quot;</div>
<div class="c num" style="left:323px;width:53px;top:558px;text-align:right;line-height:25px;">439.18</div>
<div class="c b" style="left:379px;width:79px;top:558px;text-align:right;line-height:25px;">E8F-P-26</div>
<div class="c num" style="left:461px;width:58px;top:558px;text-align:right;line-height:25px;">297°34&#x27;</div>
<div class="c num" style="left:522px;width:63px;top:558px;text-align:right;line-height:25px;">9,24</div>
<div class="c tx" style="left:591px;width:223px;top:558px;line-height:25px;letter-spacing:0.38px;">Estrada do Lambari</div>
<div class="a" style="left:3px;top:581px;width:23px;height:22px;background:linear-gradient(#fefefe,#ebebeb)"></div>
<div class="a" style="left:3px;top:603px;width:23px;height:1px;background:#888"></div>
<div class="a" style="left:26px;top:581px;width:1px;height:23px;background:#777"></div>
<div class="c tx" style="left:6px;top:581px;line-height:25px;font-size:15.5px">38</div>
<div class="a" style="left:27px;top:603px;width:787px;height:1px;background:#d4d4d4"></div>
<div class="a" style="left:108px;top:581px;width:1px;height:23px;background:#d4d4d4"></div>
<div class="a" style="left:215px;top:581px;width:1px;height:23px;background:#d4d4d4"></div>
<div class="a" style="left:322px;top:581px;width:1px;height:23px;background:#d4d4d4"></div>
<div class="a" style="left:378px;top:581px;width:1px;height:23px;background:#d4d4d4"></div>
<div class="a" style="left:460px;top:581px;width:1px;height:23px;background:#d4d4d4"></div>
<div class="a" style="left:521px;top:581px;width:1px;height:23px;background:#d4d4d4"></div>
<div class="a" style="left:587px;top:581px;width:1px;height:23px;background:#d4d4d4"></div>
<div class="c b" style="left:27px;width:79px;top:581px;text-align:right;line-height:25px;">E8F-P-26</div>
<div class="c num" style="left:109px;width:104px;top:581px;text-align:right;line-height:25px;">-50°23&#x27;58.317&quot;</div>
<div class="c num" style="left:216px;width:104px;top:581px;text-align:right;line-height:25px;">-20°42&#x27;54.079&quot;</div>
<div class="c num" style="left:323px;width:53px;top:581px;text-align:right;line-height:25px;">437.61</div>
<div class="c b" style="left:379px;width:79px;top:581px;text-align:right;line-height:25px;">E8F-P-27</div>
<div class="c num" style="left:461px;width:58px;top:581px;text-align:right;line-height:25px;">297°07&#x27;</div>
<div class="c num" style="left:522px;width:63px;top:581px;text-align:right;line-height:25px;">170,41</div>
<div class="c tx" style="left:591px;width:223px;top:581px;line-height:25px;letter-spacing:0.38px;">Estrada do Lambari</div>
<div class="a" style="left:3px;top:604px;width:23px;height:22px;background:linear-gradient(#fefefe,#ebebeb)"></div>
<div class="a" style="left:3px;top:626px;width:23px;height:1px;background:#888"></div>
<div class="a" style="left:26px;top:604px;width:1px;height:23px;background:#777"></div>
<div class="c tx" style="left:6px;top:604px;line-height:25px;font-size:15.5px">39</div>
<div class="a" style="left:27px;top:626px;width:787px;height:1px;background:#d4d4d4"></div>
<div class="a" style="left:108px;top:604px;width:1px;height:23px;background:#d4d4d4"></div>
<div class="a" style="left:215px;top:604px;width:1px;height:23px;background:#d4d4d4"></div>
<div class="a" style="left:322px;top:604px;width:1px;height:23px;background:#d4d4d4"></div>
<div class="a" style="left:378px;top:604px;width:1px;height:23px;background:#d4d4d4"></div>
<div class="a" style="left:460px;top:604px;width:1px;height:23px;background:#d4d4d4"></div>
<div class="a" style="left:521px;top:604px;width:1px;height:23px;background:#d4d4d4"></div>
<div class="a" style="left:587px;top:604px;width:1px;height:23px;background:#d4d4d4"></div>
<div class="c b" style="left:27px;width:79px;top:604px;text-align:right;line-height:25px;">E8F-P-27</div>
<div class="c num" style="left:109px;width:104px;top:604px;text-align:right;line-height:25px;">-50°24&#x27;03.558&quot;</div>
<div class="c num" style="left:216px;width:104px;top:604px;text-align:right;line-height:25px;">-20°42&#x27;51.552&quot;</div>
<div class="c num" style="left:323px;width:53px;top:604px;text-align:right;line-height:25px;">426.52</div>
<div class="c b" style="left:379px;width:79px;top:604px;text-align:right;line-height:25px;">E8F-M-12</div>
<div class="c num" style="left:461px;width:58px;top:604px;text-align:right;line-height:25px;">296°43&#x27;</div>
<div class="c num" style="left:522px;width:63px;top:604px;text-align:right;line-height:25px;">69,75</div>
<div class="c tx" style="left:591px;width:223px;top:604px;line-height:25px;letter-spacing:0.38px;">Estrada do Lambari</div>
<div class="a" style="left:3px;top:627px;width:23px;height:22px;background:linear-gradient(#fefefe,#ebebeb)"></div>
<div class="a" style="left:3px;top:649px;width:23px;height:1px;background:#888"></div>
<div class="a" style="left:26px;top:627px;width:1px;height:23px;background:#777"></div>
<div class="c tx" style="left:6px;top:627px;line-height:25px;font-size:15.5px">40</div>
<div class="a" style="left:27px;top:649px;width:787px;height:1px;background:#d4d4d4"></div>
<div class="a" style="left:108px;top:627px;width:1px;height:23px;background:#d4d4d4"></div>
<div class="a" style="left:215px;top:627px;width:1px;height:23px;background:#d4d4d4"></div>
<div class="a" style="left:322px;top:627px;width:1px;height:23px;background:#d4d4d4"></div>
<div class="a" style="left:378px;top:627px;width:1px;height:23px;background:#d4d4d4"></div>
<div class="a" style="left:460px;top:627px;width:1px;height:23px;background:#d4d4d4"></div>
<div class="a" style="left:521px;top:627px;width:1px;height:23px;background:#d4d4d4"></div>
<div class="a" style="left:587px;top:627px;width:1px;height:23px;background:#d4d4d4"></div>
<div class="c b" style="left:27px;width:79px;top:627px;text-align:right;line-height:25px;">E8F-M-12</div>
<div class="c num" style="left:109px;width:104px;top:627px;text-align:right;line-height:25px;">-50°24&#x27;05.711&quot;</div>
<div class="c num" style="left:216px;width:104px;top:627px;text-align:right;line-height:25px;">-20°42&#x27;50.532&quot;</div>
<div class="c num" style="left:323px;width:53px;top:627px;text-align:right;line-height:25px;">424.12</div>
<div class="c b" style="left:379px;width:79px;top:627px;text-align:right;line-height:25px;">E8F-V-2</div>
<div class="c num" style="left:461px;width:58px;top:627px;text-align:right;line-height:25px;">296°43&#x27;</div>
<div class="c num" style="left:522px;width:63px;top:627px;text-align:right;line-height:25px;">18,47</div>
<div class="c tx" style="left:591px;width:223px;top:627px;line-height:25px;letter-spacing:0.38px;">Estrada do Lambari</div>
<div class="a" style="left:3px;top:650px;width:23px;height:22px;background:linear-gradient(#fefefe,#ebebeb)"></div>
<div class="a" style="left:3px;top:672px;width:23px;height:1px;background:#888"></div>
<div class="a" style="left:26px;top:650px;width:1px;height:23px;background:#777"></div>
<div class="c tx" style="left:6px;top:650px;line-height:25px;font-size:15.5px">41</div>
<div class="a" style="left:27px;top:672px;width:787px;height:1px;background:#d4d4d4"></div>
<div class="a" style="left:108px;top:650px;width:1px;height:23px;background:#d4d4d4"></div>
<div class="a" style="left:215px;top:650px;width:1px;height:23px;background:#d4d4d4"></div>
<div class="a" style="left:322px;top:650px;width:1px;height:23px;background:#d4d4d4"></div>
<div class="a" style="left:378px;top:650px;width:1px;height:23px;background:#d4d4d4"></div>
<div class="a" style="left:460px;top:650px;width:1px;height:23px;background:#d4d4d4"></div>
<div class="a" style="left:521px;top:650px;width:1px;height:23px;background:#d4d4d4"></div>
<div class="a" style="left:587px;top:650px;width:1px;height:23px;background:#d4d4d4"></div>
<div class="c b" style="left:27px;width:79px;top:650px;text-align:right;line-height:25px;">E8F-V-2</div>
<div class="c num" style="left:109px;width:104px;top:650px;text-align:right;line-height:25px;">-50°24&#x27;06.281&quot;</div>
<div class="c num" style="left:216px;width:104px;top:650px;text-align:right;line-height:25px;">-20°42&#x27;50.262&quot;</div>
<div class="c num" style="left:323px;width:53px;top:650px;text-align:right;line-height:25px;">422.55</div>
<div class="c b" style="left:379px;width:79px;top:650px;text-align:right;line-height:25px;">E8F-P-28</div>
<div class="c num" style="left:461px;width:58px;top:650px;text-align:right;line-height:25px;">341°17&#x27;</div>
<div class="c num" style="left:522px;width:63px;top:650px;text-align:right;line-height:25px;">3,25</div>
<div class="c tx" style="left:591px;width:223px;top:650px;line-height:25px;letter-spacing:0.15px;">C?rrego do Cocho</div>
<div class="a" style="left:3px;top:673px;width:23px;height:22px;background:linear-gradient(#fefefe,#ebebeb)"></div>
<div class="a" style="left:3px;top:695px;width:23px;height:1px;background:#888"></div>
<div class="a" style="left:26px;top:673px;width:1px;height:23px;background:#777"></div>
<div class="c tx" style="left:6px;top:673px;line-height:25px;font-size:15.5px">42</div>
<div class="a" style="left:27px;top:695px;width:787px;height:1px;background:#d4d4d4"></div>
<div class="a" style="left:108px;top:673px;width:1px;height:23px;background:#d4d4d4"></div>
<div class="a" style="left:215px;top:673px;width:1px;height:23px;background:#d4d4d4"></div>
<div class="a" style="left:322px;top:673px;width:1px;height:23px;background:#d4d4d4"></div>
<div class="a" style="left:378px;top:673px;width:1px;height:23px;background:#d4d4d4"></div>
<div class="a" style="left:460px;top:673px;width:1px;height:23px;background:#d4d4d4"></div>
<div class="a" style="left:521px;top:673px;width:1px;height:23px;background:#d4d4d4"></div>
<div class="a" style="left:587px;top:673px;width:1px;height:23px;background:#d4d4d4"></div>
<div class="c b" style="left:27px;width:79px;top:673px;text-align:right;line-height:25px;">E8F-P-28</div>
<div class="c num" style="left:109px;width:104px;top:673px;text-align:right;line-height:25px;">-50°24&#x27;06.317&quot;</div>
<div class="c num" style="left:216px;width:104px;top:673px;text-align:right;line-height:25px;">-20°42&#x27;50.162&quot;</div>
<div class="c num" style="left:323px;width:53px;top:673px;text-align:right;line-height:25px;">422.60</div>
<div class="c b" style="left:379px;width:79px;top:673px;text-align:right;line-height:25px;">E8F-P-29</div>
<div class="c num" style="left:461px;width:58px;top:673px;text-align:right;line-height:25px;">341°21&#x27;</div>
<div class="c num" style="left:522px;width:63px;top:673px;text-align:right;line-height:25px;">262,92</div>
<div class="c tx" style="left:591px;width:223px;top:673px;line-height:25px;letter-spacing:0.15px;">C?rrego do Cocho</div>
<div class="a" style="left:3px;top:696px;width:23px;height:22px;background:linear-gradient(#fefefe,#ebebeb)"></div>
<div class="a" style="left:3px;top:718px;width:23px;height:1px;background:#888"></div>
<div class="a" style="left:26px;top:696px;width:1px;height:23px;background:#777"></div>
<div class="c tx" style="left:6px;top:696px;line-height:25px;font-size:15.5px">43</div>
<div class="a" style="left:27px;top:718px;width:787px;height:1px;background:#d4d4d4"></div>
<div class="a" style="left:108px;top:696px;width:1px;height:23px;background:#d4d4d4"></div>
<div class="a" style="left:215px;top:696px;width:1px;height:23px;background:#d4d4d4"></div>
<div class="a" style="left:322px;top:696px;width:1px;height:23px;background:#d4d4d4"></div>
<div class="a" style="left:378px;top:696px;width:1px;height:23px;background:#d4d4d4"></div>
<div class="a" style="left:460px;top:696px;width:1px;height:23px;background:#d4d4d4"></div>
<div class="a" style="left:521px;top:696px;width:1px;height:23px;background:#d4d4d4"></div>
<div class="a" style="left:587px;top:696px;width:1px;height:23px;background:#d4d4d4"></div>
<div class="c b" style="left:27px;width:79px;top:696px;text-align:right;line-height:25px;">E8F-P-29</div>
<div class="c num" style="left:109px;width:104px;top:696px;text-align:right;line-height:25px;">-50°24&#x27;09.222&quot;</div>
<div class="c num" style="left:216px;width:104px;top:696px;text-align:right;line-height:25px;">-20°42&#x27;42.062&quot;</div>
<div class="c num" style="left:323px;width:53px;top:696px;text-align:right;line-height:25px;">426.08</div>
<div class="c b" style="left:379px;width:79px;top:696px;text-align:right;line-height:25px;">E8F-P-30</div>
<div class="c num" style="left:461px;width:58px;top:696px;text-align:right;line-height:25px;">341°57&#x27;</div>
<div class="c num" style="left:522px;width:63px;top:696px;text-align:right;line-height:25px;">128,15</div>
<div class="c tx" style="left:591px;width:223px;top:696px;line-height:25px;letter-spacing:0.15px;">C?rrego do Cocho</div>
<div class="a" style="left:3px;top:719px;width:23px;height:22px;background:linear-gradient(#fefefe,#ebebeb)"></div>
<div class="a" style="left:3px;top:741px;width:23px;height:1px;background:#888"></div>
<div class="a" style="left:26px;top:719px;width:1px;height:23px;background:#777"></div>
<div class="c tx" style="left:6px;top:719px;line-height:25px;font-size:15.5px">44</div>
<div class="a" style="left:27px;top:741px;width:787px;height:1px;background:#d4d4d4"></div>
<div class="a" style="left:108px;top:719px;width:1px;height:23px;background:#d4d4d4"></div>
<div class="a" style="left:215px;top:719px;width:1px;height:23px;background:#d4d4d4"></div>
<div class="a" style="left:322px;top:719px;width:1px;height:23px;background:#d4d4d4"></div>
<div class="a" style="left:378px;top:719px;width:1px;height:23px;background:#d4d4d4"></div>
<div class="a" style="left:460px;top:719px;width:1px;height:23px;background:#d4d4d4"></div>
<div class="a" style="left:521px;top:719px;width:1px;height:23px;background:#d4d4d4"></div>
<div class="a" style="left:587px;top:719px;width:1px;height:23px;background:#d4d4d4"></div>
<div class="c b" style="left:27px;width:79px;top:719px;text-align:right;line-height:25px;">E8F-P-30</div>
<div class="c num" style="left:109px;width:104px;top:719px;text-align:right;line-height:25px;">-50°24&#x27;10.593&quot;</div>
<div class="c num" style="left:216px;width:104px;top:719px;text-align:right;line-height:25px;">-20°42&#x27;38.100&quot;</div>
<div class="c num" style="left:323px;width:53px;top:719px;text-align:right;line-height:25px;">427.98</div>
<div class="c b" style="left:379px;width:79px;top:719px;text-align:right;line-height:25px;">E8F-P-31</div>
<div class="c num" style="left:461px;width:58px;top:719px;text-align:right;line-height:25px;">340°11&#x27;</div>
<div class="c num" style="left:522px;width:63px;top:719px;text-align:right;line-height:25px;">92,55</div>
<div class="c tx" style="left:591px;width:223px;top:719px;line-height:25px;letter-spacing:0.15px;">C?rrego do Cocho</div>
<div class="a" style="left:3px;top:742px;width:23px;height:22px;background:linear-gradient(#fefefe,#ebebeb)"></div>
<div class="a" style="left:3px;top:764px;width:23px;height:1px;background:#888"></div>
<div class="a" style="left:26px;top:742px;width:1px;height:23px;background:#777"></div>
<div class="c tx" style="left:6px;top:742px;line-height:25px;font-size:15.5px">45</div>
<div class="a" style="left:27px;top:764px;width:787px;height:1px;background:#d4d4d4"></div>
<div class="a" style="left:108px;top:742px;width:1px;height:23px;background:#d4d4d4"></div>
<div class="a" style="left:215px;top:742px;width:1px;height:23px;background:#d4d4d4"></div>
<div class="a" style="left:322px;top:742px;width:1px;height:23px;background:#d4d4d4"></div>
<div class="a" style="left:378px;top:742px;width:1px;height:23px;background:#d4d4d4"></div>
<div class="a" style="left:460px;top:742px;width:1px;height:23px;background:#d4d4d4"></div>
<div class="a" style="left:521px;top:742px;width:1px;height:23px;background:#d4d4d4"></div>
<div class="a" style="left:587px;top:742px;width:1px;height:23px;background:#d4d4d4"></div>
<div class="c b" style="left:27px;width:79px;top:742px;text-align:right;line-height:25px;">E8F-P-31</div>
<div class="c num" style="left:109px;width:104px;top:742px;text-align:right;line-height:25px;">-50°24&#x27;11.677&quot;</div>
<div class="c num" style="left:216px;width:104px;top:742px;text-align:right;line-height:25px;">-20°42&#x27;35.269&quot;</div>
<div class="c num" style="left:323px;width:53px;top:742px;text-align:right;line-height:25px;">431.55</div>
<div class="c b" style="left:379px;width:79px;top:742px;text-align:right;line-height:25px;">E8F-P-32</div>
<div class="c num" style="left:461px;width:58px;top:742px;text-align:right;line-height:25px;">347°32&#x27;</div>
<div class="c num" style="left:522px;width:63px;top:742px;text-align:right;line-height:25px;">20,66</div>
<div class="c tx" style="left:591px;width:223px;top:742px;line-height:25px;letter-spacing:0.15px;">C?rrego do Cocho</div>
<div class="a" style="left:3px;top:765px;width:23px;height:22px;background:linear-gradient(#fefefe,#ebebeb)"></div>
<div class="a" style="left:3px;top:787px;width:23px;height:1px;background:#888"></div>
<div class="a" style="left:26px;top:765px;width:1px;height:23px;background:#777"></div>
<div class="c tx" style="left:6px;top:765px;line-height:25px;font-size:15.5px">46</div>
<div class="a" style="left:27px;top:787px;width:787px;height:1px;background:#d4d4d4"></div>
<div class="a" style="left:108px;top:765px;width:1px;height:23px;background:#d4d4d4"></div>
<div class="a" style="left:215px;top:765px;width:1px;height:23px;background:#d4d4d4"></div>
<div class="a" style="left:322px;top:765px;width:1px;height:23px;background:#d4d4d4"></div>
<div class="a" style="left:378px;top:765px;width:1px;height:23px;background:#d4d4d4"></div>
<div class="a" style="left:460px;top:765px;width:1px;height:23px;background:#d4d4d4"></div>
<div class="a" style="left:521px;top:765px;width:1px;height:23px;background:#d4d4d4"></div>
<div class="a" style="left:587px;top:765px;width:1px;height:23px;background:#d4d4d4"></div>
<div class="c b" style="left:27px;width:79px;top:765px;text-align:right;line-height:25px;">E8F-P-32</div>
<div class="c num" style="left:109px;width:104px;top:765px;text-align:right;line-height:25px;">-50°24&#x27;11.831&quot;</div>
<div class="c num" style="left:216px;width:104px;top:765px;text-align:right;line-height:25px;">-20°42&#x27;34.613&quot;</div>
<div class="c num" style="left:323px;width:53px;top:765px;text-align:right;line-height:25px;">432.58</div>
<div class="c b" style="left:379px;width:79px;top:765px;text-align:right;line-height:25px;">E8F-V-3</div>
<div class="c num" style="left:461px;width:58px;top:765px;text-align:right;line-height:25px;">7°13&#x27;</div>
<div class="c num" style="left:522px;width:63px;top:765px;text-align:right;line-height:25px;">9,67</div>
<div class="c tx" style="left:591px;width:223px;top:765px;line-height:25px;letter-spacing:0.15px;">C?rrego do Cocho</div>
<div class="a" style="left:3px;top:788px;width:23px;height:22px;background:linear-gradient(#fefefe,#ebebeb)"></div>
<div class="a" style="left:3px;top:810px;width:23px;height:1px;background:#888"></div>
<div class="a" style="left:26px;top:788px;width:1px;height:23px;background:#777"></div>
<div class="c tx" style="left:6px;top:788px;line-height:25px;font-size:15.5px">47</div>
<div class="a" style="left:27px;top:810px;width:787px;height:1px;background:#d4d4d4"></div>
<div class="a" style="left:108px;top:788px;width:1px;height:23px;background:#d4d4d4"></div>
<div class="a" style="left:215px;top:788px;width:1px;height:23px;background:#d4d4d4"></div>
<div class="a" style="left:322px;top:788px;width:1px;height:23px;background:#d4d4d4"></div>
<div class="a" style="left:378px;top:788px;width:1px;height:23px;background:#d4d4d4"></div>
<div class="a" style="left:460px;top:788px;width:1px;height:23px;background:#d4d4d4"></div>
<div class="a" style="left:521px;top:788px;width:1px;height:23px;background:#d4d4d4"></div>
<div class="a" style="left:587px;top:788px;width:1px;height:23px;background:#d4d4d4"></div>
<div class="c b" style="left:27px;width:79px;top:788px;text-align:right;line-height:25px;">E8F-V-3</div>
<div class="c num" style="left:109px;width:104px;top:788px;text-align:right;line-height:25px;">-50°24&#x27;11.789&quot;</div>
<div class="c num" style="left:216px;width:104px;top:788px;text-align:right;line-height:25px;">-20°42&#x27;34.301&quot;</div>
<div class="c num" style="left:323px;width:53px;top:788px;text-align:right;line-height:25px;">432.58</div>
<div class="c b" style="left:379px;width:79px;top:788px;text-align:right;line-height:25px;">E8F-M-13</div>
<div class="c num" style="left:461px;width:58px;top:788px;text-align:right;line-height:25px;">293°51&#x27;</div>
<div class="c num" style="left:522px;width:63px;top:788px;text-align:right;line-height:25px;">231,80</div>
<div class="c b" style="left:591px;width:223px;top:788px;line-height:25px;color:#e00000;font-size:15.5px;letter-spacing:0.6px;">None</div>
<div class="a" style="left:3px;top:811px;width:23px;height:22px;background:linear-gradient(#fefefe,#ebebeb)"></div>
<div class="a" style="left:3px;top:833px;width:23px;height:1px;background:#888"></div>
<div class="a" style="left:26px;top:811px;width:1px;height:23px;background:#777"></div>
<div class="c tx" style="left:6px;top:811px;line-height:25px;font-size:15.5px">48</div>
<div class="a" style="left:27px;top:833px;width:787px;height:1px;background:#d4d4d4"></div>
<div class="a" style="left:108px;top:811px;width:1px;height:23px;background:#d4d4d4"></div>
<div class="a" style="left:215px;top:811px;width:1px;height:23px;background:#d4d4d4"></div>
<div class="a" style="left:322px;top:811px;width:1px;height:23px;background:#d4d4d4"></div>
<div class="a" style="left:378px;top:811px;width:1px;height:23px;background:#d4d4d4"></div>
<div class="a" style="left:460px;top:811px;width:1px;height:23px;background:#d4d4d4"></div>
<div class="a" style="left:521px;top:811px;width:1px;height:23px;background:#d4d4d4"></div>
<div class="a" style="left:587px;top:811px;width:1px;height:23px;background:#d4d4d4"></div>
<div class="c b" style="left:27px;width:79px;top:811px;text-align:right;line-height:25px;">E8F-M-13</div>
<div class="c num" style="left:109px;width:104px;top:811px;text-align:right;line-height:25px;">-50°24&#x27;19.115&quot;</div>
<div class="c num" style="left:216px;width:104px;top:811px;text-align:right;line-height:25px;">-20°42&#x27;31.253&quot;</div>
<div class="c num" style="left:323px;width:53px;top:811px;text-align:right;line-height:25px;">450.30</div>
<div class="c b" style="left:379px;width:79px;top:811px;text-align:right;line-height:25px;">E8F-P-33</div>
<div class="c num" style="left:461px;width:58px;top:811px;text-align:right;line-height:25px;">293°51&#x27;</div>
<div class="c num" style="left:522px;width:63px;top:811px;text-align:right;line-height:25px;">271,91</div>
<div class="c b" style="left:591px;width:223px;top:811px;line-height:25px;color:#e00000;font-size:15.5px;letter-spacing:0.6px;">None</div>
<div class="a" style="left:3px;top:834px;width:23px;height:22px;background:linear-gradient(#fefefe,#ebebeb)"></div>
<div class="a" style="left:3px;top:856px;width:23px;height:1px;background:#888"></div>
<div class="a" style="left:26px;top:834px;width:1px;height:23px;background:#777"></div>
<div class="c tx" style="left:6px;top:834px;line-height:25px;font-size:15.5px">49</div>
<div class="a" style="left:27px;top:856px;width:787px;height:1px;background:#d4d4d4"></div>
<div class="a" style="left:108px;top:834px;width:1px;height:23px;background:#d4d4d4"></div>
<div class="a" style="left:215px;top:834px;width:1px;height:23px;background:#d4d4d4"></div>
<div class="a" style="left:322px;top:834px;width:1px;height:23px;background:#d4d4d4"></div>
<div class="a" style="left:378px;top:834px;width:1px;height:23px;background:#d4d4d4"></div>
<div class="a" style="left:460px;top:834px;width:1px;height:23px;background:#d4d4d4"></div>
<div class="a" style="left:521px;top:834px;width:1px;height:23px;background:#d4d4d4"></div>
<div class="a" style="left:587px;top:834px;width:1px;height:23px;background:#d4d4d4"></div>
<div class="c b" style="left:27px;width:79px;top:834px;text-align:right;line-height:25px;">E8F-P-33</div>
<div class="c num" style="left:109px;width:104px;top:834px;text-align:right;line-height:25px;">-50°24&#x27;27.708&quot;</div>
<div class="c num" style="left:216px;width:104px;top:834px;text-align:right;line-height:25px;">-20°42&#x27;27.677&quot;</div>
<div class="c num" style="left:323px;width:53px;top:834px;text-align:right;line-height:25px;">454.75</div>
<div class="c b" style="left:379px;width:79px;top:834px;text-align:right;line-height:25px;">E8F-P-34</div>
<div class="c num" style="left:461px;width:58px;top:834px;text-align:right;line-height:25px;">294°03&#x27;</div>
<div class="c num" style="left:522px;width:63px;top:834px;text-align:right;line-height:25px;">502,52</div>
<div class="c b" style="left:591px;width:223px;top:834px;line-height:25px;color:#e00000;font-size:15.5px;letter-spacing:0.6px;">None</div>
<div class="a" style="left:3px;top:857px;width:23px;height:22px;background:linear-gradient(#fefefe,#ebebeb)"></div>
<div class="a" style="left:3px;top:879px;width:23px;height:1px;background:#888"></div>
<div class="a" style="left:26px;top:857px;width:1px;height:23px;background:#777"></div>
<div class="c tx" style="left:6px;top:857px;line-height:25px;font-size:15.5px">50</div>
<div class="a" style="left:27px;top:879px;width:787px;height:1px;background:#d4d4d4"></div>
<div class="a" style="left:108px;top:857px;width:1px;height:23px;background:#d4d4d4"></div>
<div class="a" style="left:215px;top:857px;width:1px;height:23px;background:#d4d4d4"></div>
<div class="a" style="left:322px;top:857px;width:1px;height:23px;background:#d4d4d4"></div>
<div class="a" style="left:378px;top:857px;width:1px;height:23px;background:#d4d4d4"></div>
<div class="a" style="left:460px;top:857px;width:1px;height:23px;background:#d4d4d4"></div>
<div class="a" style="left:521px;top:857px;width:1px;height:23px;background:#d4d4d4"></div>
<div class="a" style="left:587px;top:857px;width:1px;height:23px;background:#d4d4d4"></div>
<div class="c b" style="left:27px;width:79px;top:857px;text-align:right;line-height:25px;">E8F-P-34</div>
<div class="c num" style="left:109px;width:104px;top:857px;text-align:right;line-height:25px;">-50°24&#x27;43.565&quot;</div>
<div class="c num" style="left:216px;width:104px;top:857px;text-align:right;line-height:25px;">-20°42&#x27;21.017&quot;</div>
<div class="c num" style="left:323px;width:53px;top:857px;text-align:right;line-height:25px;">457.09</div>
<div class="c b" style="left:379px;width:79px;top:857px;text-align:right;line-height:25px;">E8F-M-14</div>
<div class="c num" style="left:461px;width:58px;top:857px;text-align:right;line-height:25px;">293°40&#x27;</div>
<div class="c num" style="left:522px;width:63px;top:857px;text-align:right;line-height:25px;">202,62</div>
<div class="c b" style="left:591px;width:223px;top:857px;line-height:25px;color:#e00000;font-size:15.5px;letter-spacing:0.6px;">None</div>
<div class="a" style="left:3px;top:880px;width:23px;height:22px;background:linear-gradient(#fefefe,#ebebeb)"></div>
<div class="a" style="left:3px;top:902px;width:23px;height:1px;background:#888"></div>
<div class="a" style="left:26px;top:880px;width:1px;height:23px;background:#777"></div>
<div class="c tx" style="left:6px;top:880px;line-height:25px;font-size:15.5px">51</div>
<div class="a" style="left:27px;top:902px;width:787px;height:1px;background:#d4d4d4"></div>
<div class="a" style="left:108px;top:880px;width:1px;height:23px;background:#d4d4d4"></div>
<div class="a" style="left:215px;top:880px;width:1px;height:23px;background:#d4d4d4"></div>
<div class="a" style="left:322px;top:880px;width:1px;height:23px;background:#d4d4d4"></div>
<div class="a" style="left:378px;top:880px;width:1px;height:23px;background:#d4d4d4"></div>
<div class="a" style="left:460px;top:880px;width:1px;height:23px;background:#d4d4d4"></div>
<div class="a" style="left:521px;top:880px;width:1px;height:23px;background:#d4d4d4"></div>
<div class="a" style="left:587px;top:880px;width:1px;height:23px;background:#d4d4d4"></div>
<div class="c b" style="left:27px;width:79px;top:880px;text-align:right;line-height:25px;">E8F-M-14</div>
<div class="c num" style="left:109px;width:104px;top:880px;text-align:right;line-height:25px;">-50°24&#x27;49.977&quot;</div>
<div class="c num" style="left:216px;width:104px;top:880px;text-align:right;line-height:25px;">-20°42&#x27;18.371&quot;</div>
<div class="c num" style="left:323px;width:53px;top:880px;text-align:right;line-height:25px;">473.69</div>
<div class="c b" style="left:379px;width:79px;top:880px;text-align:right;line-height:25px;">E8F-P-35</div>
<div class="c num" style="left:461px;width:58px;top:880px;text-align:right;line-height:25px;">29°26&#x27;</div>
<div class="c num" style="left:522px;width:63px;top:880px;text-align:right;line-height:25px;">42,45</div>
<div class="c tx" style="left:591px;width:223px;top:880px;line-height:25px;letter-spacing:0.38px;">Estrada do Lambari</div>
<div class="a" style="left:3px;top:903px;width:23px;height:22px;background:linear-gradient(#fefefe,#ebebeb)"></div>
<div class="a" style="left:3px;top:925px;width:23px;height:1px;background:#888"></div>
<div class="a" style="left:26px;top:903px;width:1px;height:23px;background:#777"></div>
<div class="c tx" style="left:6px;top:903px;line-height:25px;font-size:15.5px">52</div>
<div class="a" style="left:27px;top:925px;width:787px;height:1px;background:#d4d4d4"></div>
<div class="a" style="left:108px;top:903px;width:1px;height:23px;background:#d4d4d4"></div>
<div class="a" style="left:215px;top:903px;width:1px;height:23px;background:#d4d4d4"></div>
<div class="a" style="left:322px;top:903px;width:1px;height:23px;background:#d4d4d4"></div>
<div class="a" style="left:378px;top:903px;width:1px;height:23px;background:#d4d4d4"></div>
<div class="a" style="left:460px;top:903px;width:1px;height:23px;background:#d4d4d4"></div>
<div class="a" style="left:521px;top:903px;width:1px;height:23px;background:#d4d4d4"></div>
<div class="a" style="left:587px;top:903px;width:1px;height:23px;background:#d4d4d4"></div>
<div class="c b" style="left:27px;width:79px;top:903px;text-align:right;line-height:25px;">E8F-P-35</div>
<div class="c num" style="left:109px;width:104px;top:903px;text-align:right;line-height:25px;">-50°24&#x27;49.256&quot;</div>
<div class="c num" style="left:216px;width:104px;top:903px;text-align:right;line-height:25px;">-20°42&#x27;17.169&quot;</div>
<div class="c num" style="left:323px;width:53px;top:903px;text-align:right;line-height:25px;">475.12</div>
<div class="c b" style="left:379px;width:79px;top:903px;text-align:right;line-height:25px;">E8F-P-36</div>
<div class="c num" style="left:461px;width:58px;top:903px;text-align:right;line-height:25px;">40°08&#x27;</div>
<div class="c num" style="left:522px;width:63px;top:903px;text-align:right;line-height:25px;">66,98</div>
<div class="c tx" style="left:591px;width:223px;top:903px;line-height:25px;letter-spacing:0.38px;">Estrada do Lambari</div>
<div class="a" style="left:3px;top:926px;width:23px;height:22px;background:linear-gradient(#fefefe,#ebebeb)"></div>
<div class="a" style="left:3px;top:948px;width:23px;height:1px;background:#888"></div>
<div class="a" style="left:26px;top:926px;width:1px;height:23px;background:#777"></div>
<div class="c tx" style="left:6px;top:926px;line-height:25px;font-size:15.5px">53</div>
<div class="a" style="left:27px;top:948px;width:787px;height:1px;background:#d4d4d4"></div>
<div class="a" style="left:108px;top:926px;width:1px;height:23px;background:#d4d4d4"></div>
<div class="a" style="left:215px;top:926px;width:1px;height:23px;background:#d4d4d4"></div>
<div class="a" style="left:322px;top:926px;width:1px;height:23px;background:#d4d4d4"></div>
<div class="a" style="left:378px;top:926px;width:1px;height:23px;background:#d4d4d4"></div>
<div class="a" style="left:460px;top:926px;width:1px;height:23px;background:#d4d4d4"></div>
<div class="a" style="left:521px;top:926px;width:1px;height:23px;background:#d4d4d4"></div>
<div class="a" style="left:587px;top:926px;width:1px;height:23px;background:#d4d4d4"></div>
<div class="c b" style="left:27px;width:79px;top:926px;text-align:right;line-height:25px;">E8F-P-36</div>
<div class="c num" style="left:109px;width:104px;top:926px;text-align:right;line-height:25px;">-50°24&#x27;47.764&quot;</div>
<div class="c num" style="left:216px;width:104px;top:926px;text-align:right;line-height:25px;">-20°42&#x27;15.504&quot;</div>
<div class="c num" style="left:323px;width:53px;top:926px;text-align:right;line-height:25px;">475.51</div>
<div class="c b" style="left:379px;width:79px;top:926px;text-align:right;line-height:25px;">E8F-P-37</div>
<div class="c num" style="left:461px;width:58px;top:926px;text-align:right;line-height:25px;">46°31&#x27;</div>
<div class="c num" style="left:522px;width:63px;top:926px;text-align:right;line-height:25px;">35,85</div>
<div class="c tx" style="left:591px;width:223px;top:926px;line-height:25px;letter-spacing:0.38px;">Estrada do Lambari</div>
<div class="a" style="left:3px;top:949px;width:23px;height:22px;background:linear-gradient(#fefefe,#ebebeb)"></div>
<div class="a" style="left:3px;top:971px;width:23px;height:1px;background:#888"></div>
<div class="a" style="left:26px;top:949px;width:1px;height:23px;background:#777"></div>
<div class="c tx" style="left:6px;top:949px;line-height:25px;font-size:15.5px">54</div>
<div class="a" style="left:27px;top:971px;width:787px;height:1px;background:#d4d4d4"></div>
<div class="a" style="left:108px;top:949px;width:1px;height:23px;background:#d4d4d4"></div>
<div class="a" style="left:215px;top:949px;width:1px;height:23px;background:#d4d4d4"></div>
<div class="a" style="left:322px;top:949px;width:1px;height:23px;background:#d4d4d4"></div>
<div class="a" style="left:378px;top:949px;width:1px;height:23px;background:#d4d4d4"></div>
<div class="a" style="left:460px;top:949px;width:1px;height:23px;background:#d4d4d4"></div>
<div class="a" style="left:521px;top:949px;width:1px;height:23px;background:#d4d4d4"></div>
<div class="a" style="left:587px;top:949px;width:1px;height:23px;background:#d4d4d4"></div>
<div class="c b" style="left:27px;width:79px;top:949px;text-align:right;line-height:25px;">E8F-P-37</div>
<div class="c num" style="left:109px;width:104px;top:949px;text-align:right;line-height:25px;">-50°24&#x27;46.865&quot;</div>
<div class="c num" style="left:216px;width:104px;top:949px;text-align:right;line-height:25px;">-20°42&#x27;14.702&quot;</div>
<div class="c num" style="left:323px;width:53px;top:949px;text-align:right;line-height:25px;">476.12</div>
<div class="c b" style="left:379px;width:79px;top:949px;text-align:right;line-height:25px;">E8F-P-38</div>
<div class="c num" style="left:461px;width:58px;top:949px;text-align:right;line-height:25px;">47°10&#x27;</div>
<div class="c num" style="left:522px;width:63px;top:949px;text-align:right;line-height:25px;">28,41</div>
<div class="c tx" style="left:591px;width:223px;top:949px;line-height:25px;letter-spacing:0.38px;">Estrada do Lambari</div>
<div class="a" style="left:3px;top:972px;width:23px;height:22px;background:linear-gradient(#fefefe,#ebebeb)"></div>
<div class="a" style="left:3px;top:994px;width:23px;height:1px;background:#888"></div>
<div class="a" style="left:26px;top:972px;width:1px;height:23px;background:#777"></div>
<div class="c tx" style="left:6px;top:972px;line-height:25px;font-size:15.5px">55</div>
<div class="a" style="left:27px;top:972px;width:787px;height:22px;background:#0078d7"></div>
<div class="a" style="left:108px;top:972px;width:1px;height:23px;background:#5a9ad8"></div>
<div class="a" style="left:215px;top:972px;width:1px;height:23px;background:#5a9ad8"></div>
<div class="a" style="left:322px;top:972px;width:1px;height:23px;background:#5a9ad8"></div>
<div class="a" style="left:378px;top:972px;width:1px;height:23px;background:#5a9ad8"></div>
<div class="a" style="left:460px;top:972px;width:1px;height:23px;background:#5a9ad8"></div>
<div class="a" style="left:521px;top:972px;width:1px;height:23px;background:#5a9ad8"></div>
<div class="a" style="left:587px;top:972px;width:1px;height:23px;background:#5a9ad8"></div>
<div class="c b" style="left:27px;width:79px;top:972px;text-align:right;line-height:25px;color:#fff;">E8F-P-38</div>
<div class="c num" style="left:109px;width:104px;top:972px;text-align:right;line-height:25px;color:#fff;">-50°24&#x27;46.145&quot;</div>
<div class="c num" style="left:216px;width:104px;top:972px;text-align:right;line-height:25px;color:#fff;">-20°42&#x27;14.074&quot;</div>
<div class="c num" style="left:323px;width:53px;top:972px;text-align:right;line-height:25px;color:#fff;">476.04</div>
<div class="c b" style="left:379px;width:79px;top:972px;text-align:right;line-height:25px;color:#fff;">E8F-M-1</div>
<div class="c num" style="left:461px;width:58px;top:972px;text-align:right;line-height:25px;color:#fff;">47°06&#x27;</div>
<div class="c num" style="left:522px;width:63px;top:972px;text-align:right;line-height:25px;color:#fff;">32,04</div>
<div class="c tx" style="left:591px;width:223px;top:972px;line-height:25px;color:#fff;letter-spacing:0.38px;">Estrada do Lambari</div>
<div class="a" style="left:27px;top:972px;width:787px;height:23px;border:2px solid #000"></div>
<div class="a" style="left:1px;top:166px;width:1px;height:37px;background:#c8c8c8"></div>
<div class="a" style="left:1px;top:892px;width:1px;height:105px;background:#b4b4b4"></div>
<div class="a" style="left:1026px;top:167px;width:17px;height:830px;background:linear-gradient(90deg,#d6d9d6,#e6e6e6 50%,#ececec)"></div>
<svg class="a" style="left:1026px;top:167px" width="17" height="20"><path d="M5 12 L8.5 7.5 L12 12Z" fill="#606060"/><rect x="3" y="16" width="11" height="1" fill="#707070"/></svg>
<div class="a" style="left:1027px;top:899px;width:15px;height:16px;background:linear-gradient(90deg,#8a8a8a,#767676 50%,#5a5a5a)"></div>
<svg class="a" style="left:1026px;top:978px" width="17" height="19"><rect x="3" y="5" width="11" height="1" fill="#707070"/><path d="M5 11 L8.5 15.5 L12 11Z" fill="#606060"/></svg>
<div class="a" style="left:1043px;top:167px;width:9px;height:830px;background:#f0f0fa"></div>
<div class="a" style="left:1052px;top:167px;width:1px;height:830px;background:#6a6a6a"></div>
<div class="a" style="left:1053px;top:168px;width:859px;height:36px;background:#f0f0fa"></div>
<div class="a" style="left:1053px;top:204px;width:859px;height:1px;background:#9a9a9a"></div>
<div class="a" style="left:1240px;top:170px;width:1px;height:33px;background:#999"></div>
<div class="t" style="left:1246px;top:178px;font-family:'Liberation Serif',serif;font-size:16.5px;letter-spacing:1.3px">10.,10</div>
<svg class="a" style="left:1058px;top:172px" width="28" height="28" viewBox="0 0 28 28"><g stroke="#0b2d4e" stroke-width="5.4" stroke-linecap="round" fill="none"><path d="M5 15.8 L9 19.5"/><path d="M8.2 7.4 L10.5 14"/><path d="M13.7 5 L13.7 13"/><path d="M19.3 6.8 L17.8 13.5"/><path d="M22.6 11.2 L20.5 16"/></g><path d="M7.8 12.5 H23 L20.8 22.8 Q20.3 24.2 19 24.2 H10.5 Q9.5 24.2 8.8 23.2 L3.3 16.5Z" fill="#fde69c" stroke="#0b2d4e" stroke-width="1.6" stroke-linejoin="round"/><g stroke="#fde69c" stroke-width="2.6" stroke-linecap="round" fill="none"><path d="M5 15.8 L9 19.5"/><path d="M8.2 7.4 L10.5 14"/><path d="M13.7 5 L13.7 13"/><path d="M19.3 6.8 L17.8 13.5"/><path d="M22.6 11.2 L20.5 16"/></g><path d="M9 13.5 H21.8 L20 22.6 H10.2 L5.5 17.5Z" fill="#fde69c"/></svg>
<svg class="a" style="left:1095px;top:172px" width="28" height="28" viewBox="0 0 28 28"><circle cx="11.5" cy="10.8" r="8.4" fill="#fff"/><path d="M5.56036 16.73964 A8.4 8.4 0 0 1 17.43964 4.860360000000001Z" fill="#fde69c"/><circle cx="11.5" cy="10.8" r="8.4" fill="none" stroke="#0b2d4e" stroke-width="2.2"/><path d="M17.5 17 L24 23.5" stroke="#0b2d4e" stroke-width="3.6" stroke-linecap="round"/><path d="M8 6.5 H13 L15.5 9 V15 H8Z" fill="#fff" stroke="#0b2d4e" stroke-width="1.8"/><path d="M9 7.5 H12.5 L9 12Z" fill="#fde69c"/><path d="M12.5 6.5 V9.5 H15.5Z" fill="#0b2d4e"/></svg>
<svg class="a" style="left:1132px;top:172px" width="28" height="28" viewBox="0 0 28 28"><circle cx="11.5" cy="10.8" r="8.4" fill="#fff"/><path d="M5.56036 16.73964 A8.4 8.4 0 0 1 17.43964 4.860360000000001Z" fill="#fde69c"/><circle cx="11.5" cy="10.8" r="8.4" fill="none" stroke="#0b2d4e" stroke-width="2.2"/><path d="M17.5 17 L24 23.5" stroke="#0b2d4e" stroke-width="3.6" stroke-linecap="round"/><path d="M11.5 4.5 L14 7 H9Z M11.5 17 L14 14.5 H9Z M5 10.8 L7.5 8.3 V13.3Z M18 10.8 L15.5 8.3 V13.3Z" fill="#0b2d4e"/></svg>
<svg class="a" style="left:1169px;top:172px" width="28" height="28" viewBox="0 0 28 28"><circle cx="11.5" cy="10.8" r="8.4" fill="#fff"/><path d="M5.56036 16.73964 A8.4 8.4 0 0 1 17.43964 4.860360000000001Z" fill="#fde69c"/><circle cx="11.5" cy="10.8" r="8.4" fill="none" stroke="#0b2d4e" stroke-width="2.2"/><path d="M17.5 17 L24 23.5" stroke="#0b2d4e" stroke-width="3.6" stroke-linecap="round"/><path d="M11.5 6 V15.5 M6.5 10.8 H16.5" stroke="#0b2d4e" stroke-width="2"/></svg>
<svg class="a" style="left:1206px;top:172px" width="28" height="28" viewBox="0 0 28 28"><circle cx="11.5" cy="10.8" r="8.4" fill="#fff"/><path d="M5.56036 16.73964 A8.4 8.4 0 0 1 17.43964 4.860360000000001Z" fill="#fde69c"/><circle cx="11.5" cy="10.8" r="8.4" fill="none" stroke="#0b2d4e" stroke-width="2.2"/><path d="M17.5 17 L24 23.5" stroke="#0b2d4e" stroke-width="3.6" stroke-linecap="round"/><path d="M6.5 10.8 H16.5" stroke="#0b2d4e" stroke-width="2"/></svg>
<svg class="a" style="left:0;top:0" width="1912" height="997"><style>.ml{font-family:"Liberation Sans",sans-serif;font-size:14.2px;letter-spacing:-0.55px;fill:#000;stroke:#ffff00;stroke-width:3.8px;stroke-linejoin:round;paint-order:stroke fill}</style><polyline points="1206.8,339.4 1382.4,407.5 1432.5,427.6 1507.7,457.4 1529.7,466.1 1554.4,476.4 1620.6,502.5 1678.5,526.3 1805.6,575.8 1805.2,580.0 1804.0,586.5 1803.7,590.1 1803.2,594.3 1802.5,598.2 1801.5,607.0 1800.2,616.2 1799.7,627.8 1799.3,632.8 1798.0,641.0 1797.5,647.2 1797.0,651.3 1796.5,654.6 1793.7,680.6 1793.0,684.6 1792.1,689.5 1790.1,693.8 1788.5,697.2 1786.0,702.2 1783.2,707.8 1780.5,713.6 1778.4,719.5 1764.3,711.9 1765.5,709.5 1760.3,706.8 1759.0,709.1 1724.9,690.9 1689.4,756.4 1686.5,755.0 1633.0,729.2 1611.0,718.8 1605.2,716.1 1604.8,715.0 1575.2,632.3 1561.3,591.8 1550.2,562.9 1548.7,556.1 1549.1,553.0 1474.3,521.9 1386.6,485.5 1224.8,417.6 1159.4,390.6 1166.8,378.3 1182.0,361.3 1191.2,353.1 1198.5,346.6 1206.8,339.4" fill="none" stroke="#ff0000" stroke-width="1" shape-rendering="crispEdges"/><path d="M1206.8 336.4 L1209.8 339.4 L1206.8 342.4 L1203.8 339.4Z" fill="#0000ff"/><path d="M1382.4 404.5 L1385.4 407.5 L1382.4 410.5 L1379.4 407.5Z" fill="#0000ff"/><path d="M1432.5 424.6 L1435.5 427.6 L1432.5 430.6 L1429.5 427.6Z" fill="#0000ff"/><path d="M1507.7 454.4 L1510.7 457.4 L1507.7 460.4 L1504.7 457.4Z" fill="#0000ff"/><path d="M1529.7 463.1 L1532.7 466.1 L1529.7 469.1 L1526.7 466.1Z" fill="#0000ff"/><path d="M1554.4 473.4 L1557.4 476.4 L1554.4 479.4 L1551.4 476.4Z" fill="#0000ff"/><path d="M1620.6 499.5 L1623.6 502.5 L1620.6 505.5 L1617.6 502.5Z" fill="#0000ff"/><path d="M1678.5 523.3 L1681.5 526.3 L1678.5 529.3 L1675.5 526.3Z" fill="#0000ff"/><path d="M1805.6 572.8 L1808.6 575.8 L1805.6 578.8 L1802.6 575.8Z" fill="#0000ff"/><path d="M1805.2 577.0 L1808.2 580.0 L1805.2 583.0 L1802.2 580.0Z" fill="#0000ff"/><path d="M1804.0 583.5 L1807.0 586.5 L1804.0 589.5 L1801.0 586.5Z" fill="#0000ff"/><path d="M1803.7 587.1 L1806.7 590.1 L1803.7 593.1 L1800.7 590.1Z" fill="#0000ff"/><path d="M1803.2 591.3 L1806.2 594.3 L1803.2 597.3 L1800.2 594.3Z" fill="#0000ff"/><path d="M1802.5 595.2 L1805.5 598.2 L1802.5 601.2 L1799.5 598.2Z" fill="#0000ff"/><path d="M1801.5 604.0 L1804.5 607.0 L1801.5 610.0 L1798.5 607.0Z" fill="#0000ff"/><path d="M1800.2 613.2 L1803.2 616.2 L1800.2 619.2 L1797.2 616.2Z" fill="#0000ff"/><path d="M1799.7 624.8 L1802.7 627.8 L1799.7 630.8 L1796.7 627.8Z" fill="#0000ff"/><path d="M1799.3 629.8 L1802.3 632.8 L1799.3 635.8 L1796.3 632.8Z" fill="#0000ff"/><path d="M1798.0 638.0 L1801.0 641.0 L1798.0 644.0 L1795.0 641.0Z" fill="#0000ff"/><path d="M1797.5 644.2 L1800.5 647.2 L1797.5 650.2 L1794.5 647.2Z" fill="#0000ff"/><path d="M1797.0 648.3 L1800.0 651.3 L1797.0 654.3 L1794.0 651.3Z" fill="#0000ff"/><path d="M1796.5 651.6 L1799.5 654.6 L1796.5 657.6 L1793.5 654.6Z" fill="#0000ff"/><path d="M1793.7 677.6 L1796.7 680.6 L1793.7 683.6 L1790.7 680.6Z" fill="#0000ff"/><path d="M1793.0 681.6 L1796.0 684.6 L1793.0 687.6 L1790.0 684.6Z" fill="#0000ff"/><path d="M1792.1 686.5 L1795.1 689.5 L1792.1 692.5 L1789.1 689.5Z" fill="#0000ff"/><path d="M1790.1 690.8 L1793.1 693.8 L1790.1 696.8 L1787.1 693.8Z" fill="#0000ff"/><path d="M1788.5 694.2 L1791.5 697.2 L1788.5 700.2 L1785.5 697.2Z" fill="#0000ff"/><path d="M1786.0 699.2 L1789.0 702.2 L1786.0 705.2 L1783.0 702.2Z" fill="#0000ff"/><path d="M1783.2 704.8 L1786.2 707.8 L1783.2 710.8 L1780.2 707.8Z" fill="#0000ff"/><path d="M1780.5 710.6 L1783.5 713.6 L1780.5 716.6 L1777.5 713.6Z" fill="#0000ff"/><path d="M1778.4 716.5 L1781.4 719.5 L1778.4 722.5 L1775.4 719.5Z" fill="#0000ff"/><path d="M1764.3 708.9 L1767.3 711.9 L1764.3 714.9 L1761.3 711.9Z" fill="#0000ff"/><path d="M1765.5 706.5 L1768.5 709.5 L1765.5 712.5 L1762.5 709.5Z" fill="#0000ff"/><path d="M1760.3 703.8 L1763.3 706.8 L1760.3 709.8 L1757.3 706.8Z" fill="#0000ff"/><path d="M1759.0 706.1 L1762.0 709.1 L1759.0 712.1 L1756.0 709.1Z" fill="#0000ff"/><path d="M1724.9 687.9 L1727.9 690.9 L1724.9 693.9 L1721.9 690.9Z" fill="#0000ff"/><path d="M1689.4 753.4 L1692.4 756.4 L1689.4 759.4 L1686.4 756.4Z" fill="#0000ff"/><path d="M1686.5 752.0 L1689.5 755.0 L1686.5 758.0 L1683.5 755.0Z" fill="#0000ff"/><path d="M1633.0 726.2 L1636.0 729.2 L1633.0 732.2 L1630.0 729.2Z" fill="#0000ff"/><path d="M1611.0 715.8 L1614.0 718.8 L1611.0 721.8 L1608.0 718.8Z" fill="#0000ff"/><path d="M1605.2 713.1 L1608.2 716.1 L1605.2 719.1 L1602.2 716.1Z" fill="#0000ff"/><path d="M1604.8 712.0 L1607.8 715.0 L1604.8 718.0 L1601.8 715.0Z" fill="#0000ff"/><path d="M1575.2 629.3 L1578.2 632.3 L1575.2 635.3 L1572.2 632.3Z" fill="#0000ff"/><path d="M1561.3 588.8 L1564.3 591.8 L1561.3 594.8 L1558.3 591.8Z" fill="#0000ff"/><path d="M1550.2 559.9 L1553.2 562.9 L1550.2 565.9 L1547.2 562.9Z" fill="#0000ff"/><path d="M1548.7 553.1 L1551.7 556.1 L1548.7 559.1 L1545.7 556.1Z" fill="#0000ff"/><path d="M1549.1 550.0 L1552.1 553.0 L1549.1 556.0 L1546.1 553.0Z" fill="#0000ff"/><path d="M1474.3 518.9 L1477.3 521.9 L1474.3 524.9 L1471.3 521.9Z" fill="#0000ff"/><path d="M1386.6 482.5 L1389.6 485.5 L1386.6 488.5 L1383.6 485.5Z" fill="#0000ff"/><path d="M1224.8 414.6 L1227.8 417.6 L1224.8 420.6 L1221.8 417.6Z" fill="#0000ff"/><path d="M1159.4 387.6 L1162.4 390.6 L1159.4 393.6 L1156.4 390.6Z" fill="#0000ff"/><path d="M1166.8 375.3 L1169.8 378.3 L1166.8 381.3 L1163.8 378.3Z" fill="#0000ff"/><path d="M1182.0 358.3 L1185.0 361.3 L1182.0 364.3 L1179.0 361.3Z" fill="#0000ff"/><path d="M1191.2 350.1 L1194.2 353.1 L1191.2 356.1 L1188.2 353.1Z" fill="#0000ff"/><path d="M1198.5 343.6 L1201.5 346.6 L1198.5 349.6 L1195.5 346.6Z" fill="#0000ff"/><path d="M1206.8 336.4 L1209.8 339.4 L1206.8 342.4 L1203.8 339.4Z" fill="#0000ff"/><text x="1206.8" y="333.1" text-anchor="middle" class="ml">E8F-M-1</text><text x="1382.4" y="401.2" text-anchor="middle" class="ml">E8F-P-1</text><text x="1432.5" y="421.3" text-anchor="middle" class="ml">E8F-P-2</text><text x="1507.7" y="451.1" text-anchor="middle" class="ml">E8F-P-3</text><text x="1554.4" y="470.1" text-anchor="middle" class="ml">E8F-V-1</text><text x="1620.6" y="496.2" text-anchor="middle" class="ml">E8F-M-3</text><text x="1678.5" y="520.0" text-anchor="middle" class="ml">E8F-P-4</text><text x="1805.6" y="569.5" text-anchor="middle" class="ml">E8F-M-4</text><text x="1803.2" y="588.0" text-anchor="middle" class="ml">E8F-P-8</text><text x="1800.2" y="609.9" text-anchor="middle" class="ml">E8F-P-11</text><text x="1799.3" y="626.5" text-anchor="middle" class="ml">E8F-P-13</text><text x="1797.0" y="645.0" text-anchor="middle" class="ml">E8F-P-16</text><text x="1793.7" y="674.3" text-anchor="middle" class="ml">E8F-P-18</text><text x="1788.5" y="690.9" text-anchor="middle" class="ml">E8F-P-22</text><text x="1778.4" y="713.2" text-anchor="middle" class="ml">E8F-M-5</text><text x="1724.9" y="684.6" text-anchor="middle" class="ml">E8F-M-10</text><text x="1689.4" y="750.1" text-anchor="middle" class="ml">E8F-M-11</text><text x="1633.0" y="722.9" text-anchor="middle" class="ml">E8F-P-27</text><text x="1575.2" y="626.0" text-anchor="middle" class="ml">E8F-P-29</text><text x="1561.3" y="585.5" text-anchor="middle" class="ml">E8F-P-30</text><text x="1550.2" y="556.6" text-anchor="middle" class="ml">E8F-P-31</text><text x="1474.3" y="515.6" text-anchor="middle" class="ml">E8F-M-13</text><text x="1386.6" y="479.2" text-anchor="middle" class="ml">E8F-P-33</text><text x="1224.8" y="411.3" text-anchor="middle" class="ml">E8F-P-34</text><text x="1159.4" y="384.3" text-anchor="middle" class="ml">E8F-M-14</text><text x="1182.0" y="355.0" text-anchor="middle" class="ml">E8F-P-36</text></svg>
<div class="a" style="left:1053px;top:894px;width:859px;height:103px;background:#f0f0fa"></div>
<div class="a" style="left:1053px;top:960px;width:590px;height:1px;background:#a8a8a8"></div>
<div class="a" style="left:1328px;top:900px;width:1px;height:54px;background:#a8a8a8"></div>
<div class="a" style="left:1096px;top:899px;width:202px;height:26px;background:#fff;border:1px solid #c9c9c9"></div>
<div class="a" style="left:1096px;top:928px;width:169px;height:26px;background:#fff;border:1px solid #c9c9c9"></div>
<div class="a" style="left:1408px;top:899px;width:202px;height:26px;background:#fff;border:1px solid #c9c9c9"></div>
<div class="a" style="left:1408px;top:928px;width:169px;height:26px;background:#fff;border:1px solid #c9c9c9"></div>
<div class="a" style="left:1266px;top:928px;width:32px;height:26px;background:#fff;border:1px solid #6e6e6e"></div>
<div class="t" style="left:1269px;top:933px;font-size:14.5px">4</div>
<svg class="a" style="left:1282px;top:931px" width="14" height="21"><rect x="0.5" y="0.5" width="12" height="9.5" fill="#f4f4f4" stroke="#c8c8c8"/><rect x="0.5" y="10.5" width="12" height="9.5" fill="#f4f4f4" stroke="#c8c8c8"/><path d="M4 7 L6.5 4 L9 7Z M4 13.5 L6.5 16.5 L9 13.5Z" fill="#000"/></svg>
<div class="a" style="left:1578px;top:928px;width:32px;height:26px;background:#fff;border:1px solid #6e6e6e"></div>
<div class="t" style="left:1581px;top:933px;font-size:14.5px">2</div>
<svg class="a" style="left:1594px;top:931px" width="14" height="21"><rect x="0.5" y="0.5" width="12" height="9.5" fill="#f4f4f4" stroke="#c8c8c8"/><rect x="0.5" y="10.5" width="12" height="9.5" fill="#f4f4f4" stroke="#c8c8c8"/><path d="M4 7 L6.5 4 L9 7Z M4 13.5 L6.5 16.5 L9 13.5Z" fill="#000"/></svg>
<div class="t" style="left:1059px;top:918px;font-size:15px">Área:</div>
<div class="t" style="left:1302px;top:907px;font-size:14.5px">ha</div>
<div class="t" style="left:1302px;top:936px;font-size:14.5px">ha</div>
<div class="t" style="left:1099px;top:934px;font-size:14.5px;color:#000080">61,7980</div>
<div class="t" style="left:1335px;top:921px;font-size:14.5px">Perímetro:</div>
<div class="t" style="left:1615px;top:907px;font-size:14.5px">m</div>
<div class="t" style="left:1615px;top:936px;font-size:14.5px">m</div>
<div class="t" style="left:1411px;top:934px;font-size:14.5px;color:#000080">4.896,37</div>
<div class="t" style="left:1059px;top:973px;font-size:14.5px">Distâncias:</div>
<div class="a" style="left:1134px;top:966px;width:44px;height:28px;background:#fff;border:1px solid #d0d0d0"></div>
<div class="t" style="left:1137px;top:972px;font-size:14.5px">2</div>
<svg class="a" style="left:1161px;top:970px" width="14" height="21"><rect x="0.5" y="0.5" width="12" height="10" fill="#ececec" stroke="#9a9a9a"/><rect x="0.5" y="10.5" width="12" height="10" fill="#ececec" stroke="#9a9a9a"/><rect x="2" y="8" width="9" height="1" fill="#8888cc"/><rect x="2" y="11.5" width="9" height="1" fill="#8888cc"/><path d="M3.5 7 L6.5 3.5 L9.5 7Z M3.5 14 L6.5 17.5 L9.5 14Z" fill="#777"/></svg>
<div class="t" style="left:1187px;top:973px;font-size:14.5px">Azimutes:</div>
<div class="a" style="left:1257px;top:966px;width:44px;height:28px;background:#fff;border:1px solid #d0d0d0"></div>
<div class="t" style="left:1260px;top:972px;font-size:14.5px">0</div>
<svg class="a" style="left:1284px;top:970px" width="14" height="21"><rect x="0.5" y="0.5" width="12" height="10" fill="#ececec" stroke="#9a9a9a"/><rect x="0.5" y="10.5" width="12" height="10" fill="#ececec" stroke="#9a9a9a"/><rect x="2" y="8" width="9" height="1" fill="#8888cc"/><rect x="2" y="11.5" width="9" height="1" fill="#8888cc"/><path d="M3.5 7 L6.5 3.5 L9.5 7Z M3.5 14 L6.5 17.5 L9.5 14Z" fill="#777"/></svg>
<div class="t" style="left:1309px;top:973px;font-size:14.5px">Altitudes:</div>
<div class="a" style="left:1374px;top:966px;width:44px;height:28px;background:#fff;border:1px solid #d0d0d0"></div>
<div class="t" style="left:1377px;top:972px;font-size:14.5px">2</div>
<svg class="a" style="left:1401px;top:970px" width="14" height="21"><rect x="0.5" y="0.5" width="12" height="10" fill="#ececec" stroke="#9a9a9a"/><rect x="0.5" y="10.5" width="12" height="10" fill="#ececec" stroke="#9a9a9a"/><rect x="2" y="8" width="9" height="1" fill="#8888cc"/><rect x="2" y="11.5" width="9" height="1" fill="#8888cc"/><path d="M3.5 7 L6.5 3.5 L9.5 7Z M3.5 14 L6.5 17.5 L9.5 14Z" fill="#777"/></svg>
<div class="t" style="left:1427px;top:973px;font-size:14.5px">Lat/Long:</div>
<div class="a" style="left:1495px;top:966px;width:44px;height:28px;background:#fff;border:1px solid #d0d0d0"></div>
<div class="t" style="left:1498px;top:972px;font-size:14.5px">3</div>
<svg class="a" style="left:1522px;top:970px" width="14" height="21"><rect x="0.5" y="0.5" width="12" height="10" fill="#ececec" stroke="#9a9a9a"/><rect x="0.5" y="10.5" width="12" height="10" fill="#ececec" stroke="#9a9a9a"/><rect x="2" y="8" width="9" height="1" fill="#8888cc"/><rect x="2" y="11.5" width="9" height="1" fill="#8888cc"/><path d="M3.5 7 L6.5 3.5 L9.5 7Z M3.5 14 L6.5 17.5 L9.5 14Z" fill="#777"/></svg>
<div class="a" style="left:1545px;top:973px;width:13px;height:13px;background:#fff;border:1px solid #333"></div>
<div class="a" style="left:1562px;top:973px;width:80px;height:20px;overflow:hidden"><div class="t" style="left:0;top:0;font-size:14.5px">Ocultar Zero</div></div>
</body></html>
